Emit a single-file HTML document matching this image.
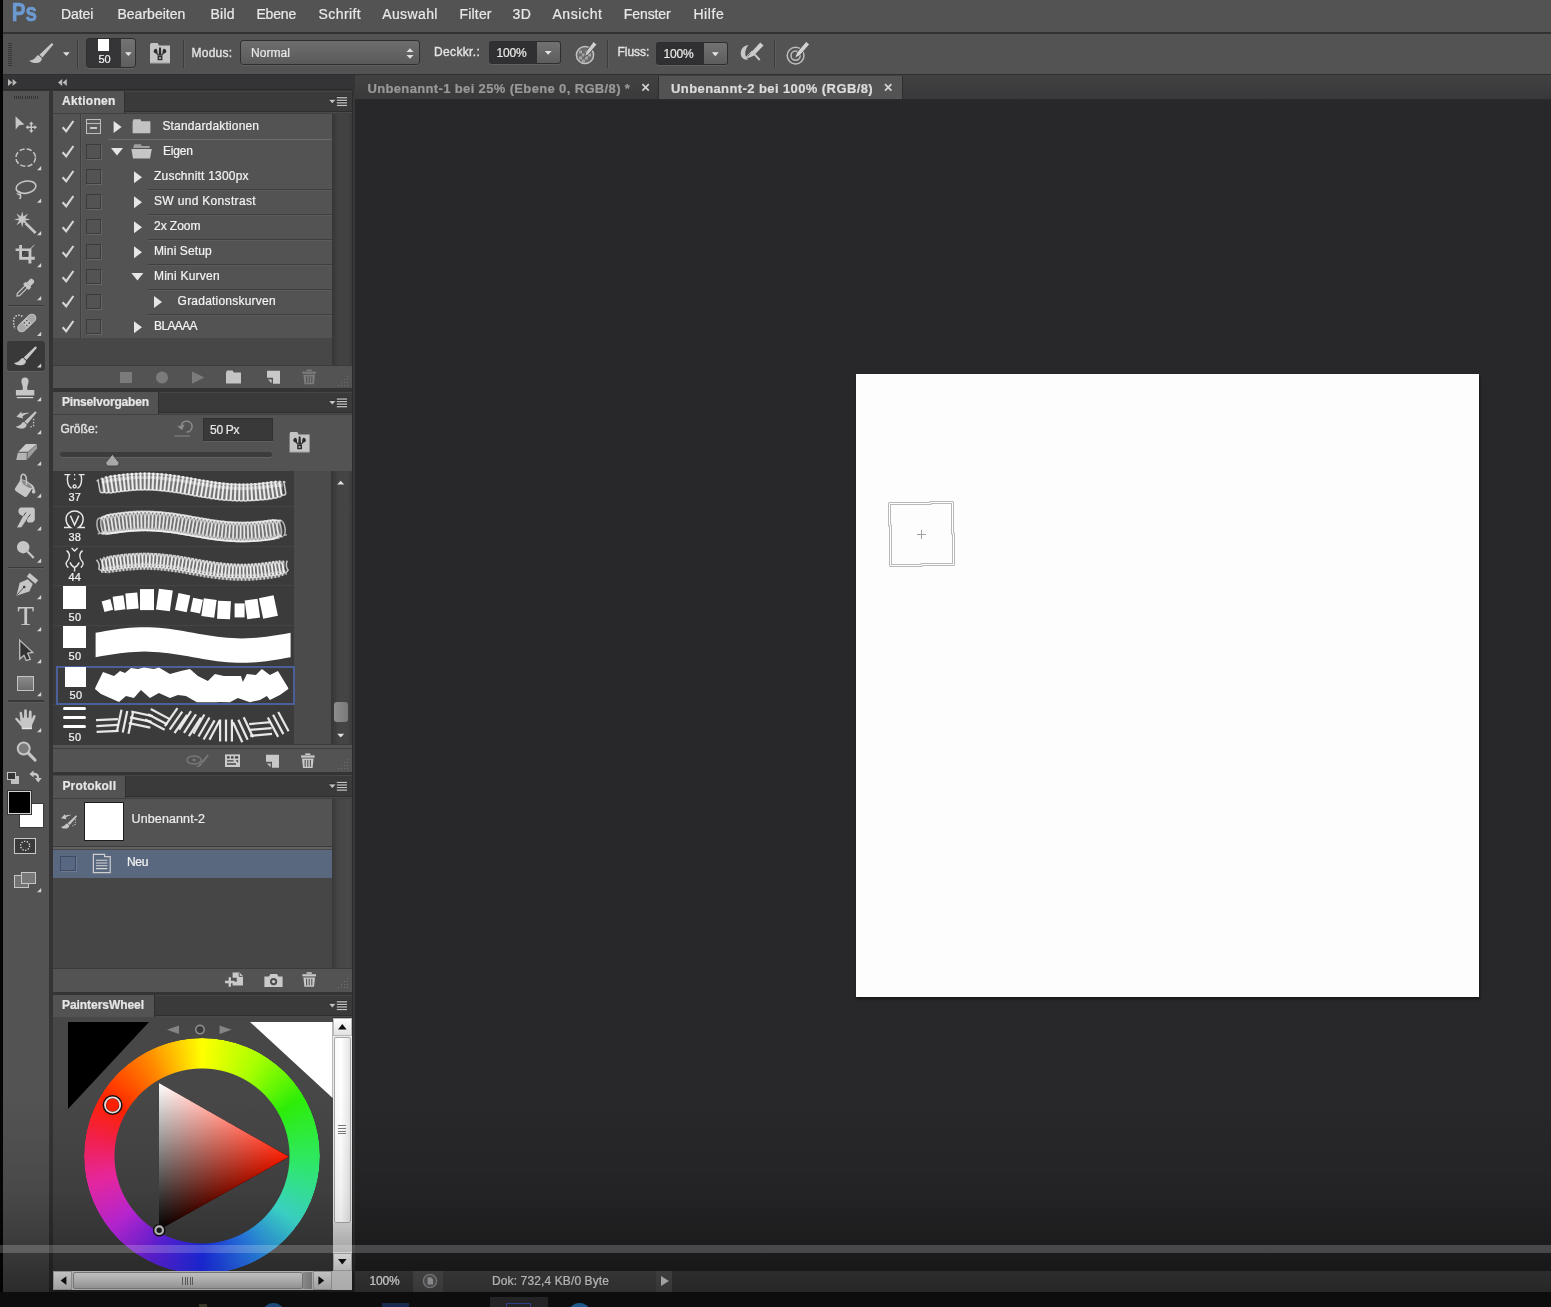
<!DOCTYPE html>
<html lang="de"><head><meta charset="utf-8"><title>Photoshop</title>
<style>
html,body{margin:0;padding:0;background:#28282a;overflow:hidden;}
#r{position:relative;width:1551px;height:1307px;overflow:hidden;font-family:"Liberation Sans", sans-serif;filter:blur(.45px);}
#r div,#r svg,#r span{position:absolute;}
.t{white-space:nowrap;-webkit-text-stroke:.22px currentColor;}
</style></head>
<body><div id="r">
<div style="left:0px;top:0px;width:1551px;height:1307px;background:#28282a;"></div>
<div style="left:0px;top:0px;width:1551px;height:32px;background:#535354;"></div>
<div style="left:0px;top:32px;width:1551px;height:1.5px;background:#323233;"></div>
<div style="left:0px;top:33.5px;width:1551px;height:40.5px;background:#535354;"></div>
<div style="left:0px;top:74px;width:1551px;height:1px;background:#2f2f30;"></div>
<div style="left:0px;top:75px;width:355px;height:16px;background:#343436;"></div>
<div style="left:354.8px;top:75px;width:1196.2px;height:24.5px;background:linear-gradient(#414142,#38383a);"></div>
<div style="left:354.8px;top:99px;width:1196.2px;height:1px;background:#2b2b2d;"></div>
<div style="left:0px;top:0px;width:2.5px;height:1292px;background:#050505;"></div>
<div style="left:2.5px;top:90.5px;width:46.5px;height:1201px;background:#535354;"></div>
<div style="left:49px;top:90.5px;width:4px;height:1201px;background:#343435;"></div>
<div style="left:53px;top:90.5px;width:299px;height:1201px;background:#343435;"></div>
<div style="left:352px;top:90.5px;width:1.4px;height:1201px;background:#2b2b2c;"></div>
<div style="left:353.4px;top:90.5px;width:1.4px;height:1201px;background:#373738;"></div>
<div style="left:2.5px;top:89.3px;width:350px;height:1.2px;background:#2b2b2c;"></div>
<div style="left:354.8px;top:75.5px;width:302.7px;height:23.5px;background:linear-gradient(#414142,#3a3a3b);"></div>
<div style="left:657.5px;top:75.5px;width:1px;height:23.5px;background:#2e2e2f;"></div>
<div style="left:658.5px;top:75.5px;width:243px;height:23.8px;background:#535354;"></div>
<div style="left:901.5px;top:75.5px;width:1px;height:23.5px;background:#2e2e2f;"></div>
<div style="left:856px;top:374px;width:622.5px;height:623px;background:#fefdfe;box-shadow:1px 2px 3px rgba(0,0,0,.45)"></div>
<div style="left:354.8px;top:1270.5px;width:1196.2px;height:21px;background:#4a4a4c;"></div>
<div style="left:354.8px;top:1270.5px;width:58.2px;height:21px;background:#505052;"></div>
<div style="left:413px;top:1270.5px;width:30px;height:21px;background:#6a6a6c;"></div>
<div style="left:443px;top:1270.5px;width:213px;height:21px;background:#58585a;"></div>
<div style="left:656px;top:1270.5px;width:16px;height:21px;background:#666668;"></div>
<div style="left:0px;top:1291.5px;width:1551px;height:15.5px;background:#0d0d0e;"></div>
<div style="left:8px;top:42.5px;width:4px;height:1px;background:#38383a;"></div>
<div style="left:8px;top:44.55px;width:4px;height:1px;background:#38383a;"></div>
<div style="left:8px;top:46.6px;width:4px;height:1px;background:#38383a;"></div>
<div style="left:8px;top:48.65px;width:4px;height:1px;background:#38383a;"></div>
<div style="left:8px;top:50.7px;width:4px;height:1px;background:#38383a;"></div>
<div style="left:8px;top:52.75px;width:4px;height:1px;background:#38383a;"></div>
<div style="left:8px;top:54.8px;width:4px;height:1px;background:#38383a;"></div>
<div style="left:8px;top:56.849999999999994px;width:4px;height:1px;background:#38383a;"></div>
<div style="left:8px;top:58.9px;width:4px;height:1px;background:#38383a;"></div>
<div style="left:8px;top:60.95px;width:4px;height:1px;background:#38383a;"></div>
<div style="left:8px;top:63.0px;width:4px;height:1px;background:#38383a;"></div>
<div style="left:8px;top:65.05px;width:4px;height:1px;background:#38383a;"></div>
<div style="left:77px;top:40px;width:1px;height:27.5px;background:#3c3c3d;"></div>
<div style="left:78px;top:40px;width:1px;height:27.5px;background:#5c5c5d;"></div>
<div style="left:183px;top:40px;width:1px;height:27.5px;background:#3c3c3d;"></div>
<div style="left:184px;top:40px;width:1px;height:27.5px;background:#5c5c5d;"></div>
<div style="left:607.3px;top:40px;width:1px;height:27.5px;background:#3c3c3d;"></div>
<div style="left:608.3px;top:40px;width:1px;height:27.5px;background:#5c5c5d;"></div>
<div style="left:773.6px;top:40px;width:1px;height:27.5px;background:#3c3c3d;"></div>
<div style="left:774.6px;top:40px;width:1px;height:27.5px;background:#5c5c5d;"></div>
<div style="left:87px;top:38.7px;width:47.6px;height:28.6px;background:#353537;border-radius:3px;box-shadow:0 0 0 1px #2e2e30, 0 1px 0 1px #626263;"></div>
<div style="left:121.3px;top:38.7px;width:13.3px;height:28.6px;background:linear-gradient(#737374,#5e5e5f);border-radius:0 3px 3px 0;"></div>
<div style="left:97.8px;top:39.4px;width:11.2px;height:11.2px;background:#ffffff;"></div>
<div style="left:241px;top:41.4px;width:177.6px;height:23px;background:linear-gradient(#6e6e6f,#5a5a5b);border-radius:3px;box-shadow:0 0 0 1px #2f2f30, 0 1px 0 1px #606061;"></div>
<div style="left:490px;top:41.5px;width:69.7px;height:21.5px;background:#303032;border-radius:2px;box-shadow:0 0 0 1px #2e2e30, 0 1px 0 1px #616162;"></div>
<div style="left:536.7px;top:41.5px;width:23px;height:21.5px;background:linear-gradient(#727273,#5d5d5e);border-radius:0 2px 2px 0;"></div>
<div style="left:657px;top:42.8px;width:69.8px;height:21.5px;background:#303032;border-radius:2px;box-shadow:0 0 0 1px #2e2e30, 0 1px 0 1px #616162;"></div>
<div style="left:703.8px;top:42.8px;width:23px;height:21.5px;background:linear-gradient(#727273,#5d5d5e);border-radius:0 2px 2px 0;"></div>
<div style="left:14.0px;top:95.6px;width:1px;height:3px;background:#343435;"></div>
<div style="left:16.1px;top:95.6px;width:1px;height:3px;background:#343435;"></div>
<div style="left:18.2px;top:95.6px;width:1px;height:3px;background:#343435;"></div>
<div style="left:20.3px;top:95.6px;width:1px;height:3px;background:#343435;"></div>
<div style="left:22.4px;top:95.6px;width:1px;height:3px;background:#343435;"></div>
<div style="left:24.5px;top:95.6px;width:1px;height:3px;background:#343435;"></div>
<div style="left:26.6px;top:95.6px;width:1px;height:3px;background:#343435;"></div>
<div style="left:28.700000000000003px;top:95.6px;width:1px;height:3px;background:#343435;"></div>
<div style="left:30.8px;top:95.6px;width:1px;height:3px;background:#343435;"></div>
<div style="left:32.900000000000006px;top:95.6px;width:1px;height:3px;background:#343435;"></div>
<div style="left:35.0px;top:95.6px;width:1px;height:3px;background:#343435;"></div>
<div style="left:37.1px;top:95.6px;width:1px;height:3px;background:#343435;"></div>
<div style="left:8px;top:304.8px;width:36px;height:1.2px;background:#39393a;"></div>
<div style="left:8px;top:306.0px;width:36px;height:1px;background:#5b5b5c;"></div>
<div style="left:8px;top:567.2px;width:36px;height:1.2px;background:#39393a;"></div>
<div style="left:8px;top:568.4000000000001px;width:36px;height:1px;background:#5b5b5c;"></div>
<div style="left:8px;top:700.4px;width:36px;height:1.2px;background:#39393a;"></div>
<div style="left:8px;top:701.6px;width:36px;height:1px;background:#5b5b5c;"></div>
<div style="left:7.3px;top:341.4px;width:38px;height:29.2px;background:#39393a;border-radius:3px;box-shadow:0 1px 0 #5f5f60;"></div>
<div style="left:16.9px;top:675.8px;width:17.4px;height:15.2px;background:linear-gradient(#8a8a8b,#6c6c6d);box-sizing:border-box;border:1.6px solid #c2c2c2;"></div>
<div style="left:11px;top:775.6px;width:8.4px;height:8.1px;background:#c0c0c0;"></div>
<div style="left:7px;top:771.8px;width:8.6px;height:8.2px;background:#343435;box-sizing:border-box;border:1.2px solid #c4c4c4;"></div>
<div style="left:20.4px;top:803.7px;width:23px;height:22.9px;background:#ffffff;box-shadow:0 0 0 1px #3a3a3b;"></div>
<div style="left:7.8px;top:791px;width:23.5px;height:23.3px;background:#000000;box-sizing:border-box;border:1.8px solid #d2d2d2;box-shadow:0 0 0 1px #343435;"></div>
<div style="left:14.4px;top:837.9px;width:21.4px;height:15.9px;background:#3a3a3b;box-sizing:border-box;border:1.6px solid #c8c8c8;"></div>
<div style="left:14.4px;top:875.2px;width:14.9px;height:12.4px;background:#727273;box-sizing:border-box;border:1.5px solid #c6c6c6;"></div>
<div style="left:20.7px;top:871.5px;width:15.1px;height:12.1px;background:#787879;box-sizing:border-box;border:1.5px solid #c6c6c6;"></div>
<div style="left:53px;top:90.5px;width:299px;height:22.5px;background:#3a3a3b;"></div>
<div style="left:53px;top:90.5px;width:299px;height:1px;background:#464647;"></div>
<div style="left:53px;top:110.9px;width:299px;height:1.2px;background:#2f2f30;"></div>
<div style="left:53px;top:112.1px;width:299px;height:1px;background:#4a4a4b;"></div>
<div style="left:53px;top:91.0px;width:71px;height:22.2px;background:#535354;box-shadow:1px 0 0 #303031;"></div>
<div style="left:53px;top:113px;width:299px;height:275px;background:#535354;"></div>
<div style="left:53px;top:113px;width:299px;height:1px;background:#404041;"></div>
<div style="left:332px;top:114px;width:20px;height:251px;background:linear-gradient(90deg,#363637,#424243 30%,#424243 80%,#3a3a3b);"></div>
<div style="left:53px;top:338px;width:279px;height:27px;background:#474748;"></div>
<div style="left:53px;top:365px;width:299px;height:1px;background:#3b3b3c;"></div>
<div style="left:53px;top:366px;width:299px;height:22px;background:#535354;"></div>
<div style="left:80px;top:114px;width:1px;height:224px;background:#404041;"></div>
<div style="left:81px;top:114px;width:1px;height:224px;background:#5a5a5b;"></div>
<div style="left:108px;top:139px;width:224px;height:1px;background:#6c6c6d;"></div>
<div style="left:148px;top:189px;width:184px;height:1.2px;background:#3e3e3f;"></div>
<div style="left:148px;top:190.2px;width:184px;height:1px;background:#5b5b5c;"></div>
<div style="left:148px;top:214px;width:184px;height:1.2px;background:#3e3e3f;"></div>
<div style="left:148px;top:215.2px;width:184px;height:1px;background:#5b5b5c;"></div>
<div style="left:148px;top:239px;width:184px;height:1.2px;background:#3e3e3f;"></div>
<div style="left:148px;top:240.2px;width:184px;height:1px;background:#5b5b5c;"></div>
<div style="left:148px;top:264px;width:184px;height:1.2px;background:#3e3e3f;"></div>
<div style="left:148px;top:265.2px;width:184px;height:1px;background:#5b5b5c;"></div>
<div style="left:148px;top:289px;width:184px;height:1.2px;background:#3e3e3f;"></div>
<div style="left:148px;top:290.2px;width:184px;height:1px;background:#5b5b5c;"></div>
<div style="left:148px;top:314px;width:184px;height:1.2px;background:#3e3e3f;"></div>
<div style="left:148px;top:315.2px;width:184px;height:1px;background:#5b5b5c;"></div>
<div style="left:85.6px;top:144.2px;width:15.4px;height:14.4px;background:#535354;box-sizing:border-box;border:1px solid #3c3c3d;box-shadow:1px 1px 0 #666667;"></div>
<div style="left:85.6px;top:169.2px;width:15.4px;height:14.4px;background:#535354;box-sizing:border-box;border:1px solid #3c3c3d;box-shadow:1px 1px 0 #666667;"></div>
<div style="left:85.6px;top:194.2px;width:15.4px;height:14.4px;background:#535354;box-sizing:border-box;border:1px solid #3c3c3d;box-shadow:1px 1px 0 #666667;"></div>
<div style="left:85.6px;top:219.2px;width:15.4px;height:14.4px;background:#535354;box-sizing:border-box;border:1px solid #3c3c3d;box-shadow:1px 1px 0 #666667;"></div>
<div style="left:85.6px;top:244.2px;width:15.4px;height:14.4px;background:#535354;box-sizing:border-box;border:1px solid #3c3c3d;box-shadow:1px 1px 0 #666667;"></div>
<div style="left:85.6px;top:269.20000000000005px;width:15.4px;height:14.4px;background:#535354;box-sizing:border-box;border:1px solid #3c3c3d;box-shadow:1px 1px 0 #666667;"></div>
<div style="left:85.6px;top:294.20000000000005px;width:15.4px;height:14.4px;background:#535354;box-sizing:border-box;border:1px solid #3c3c3d;box-shadow:1px 1px 0 #666667;"></div>
<div style="left:85.6px;top:319.20000000000005px;width:15.4px;height:14.4px;background:#535354;box-sizing:border-box;border:1px solid #3c3c3d;box-shadow:1px 1px 0 #666667;"></div>
<div style="left:85.6px;top:119.4px;width:15px;height:14.2px;background:#5a5a5b;box-sizing:border-box;border:1.3px solid #bdbdbd;"></div>
<div style="left:86.5px;top:122.6px;width:13.4px;height:1.2px;background:#bdbdbd;"></div>
<div style="left:89.8px;top:127.4px;width:6.8px;height:1.6px;background:#c8c8c8;"></div>
<div style="left:120px;top:372px;width:12px;height:11.4px;background:#7b7b7c;"></div>
<div style="left:337.5px;top:385px;width:1.4px;height:1.4px;background:#6e6e6f;"></div>
<div style="left:340.5px;top:382px;width:1.4px;height:1.4px;background:#6e6e6f;"></div>
<div style="left:340.5px;top:385px;width:1.4px;height:1.4px;background:#6e6e6f;"></div>
<div style="left:343.5px;top:379px;width:1.4px;height:1.4px;background:#6e6e6f;"></div>
<div style="left:343.5px;top:382px;width:1.4px;height:1.4px;background:#6e6e6f;"></div>
<div style="left:343.5px;top:385px;width:1.4px;height:1.4px;background:#6e6e6f;"></div>
<div style="left:346.5px;top:376px;width:1.4px;height:1.4px;background:#6e6e6f;"></div>
<div style="left:346.5px;top:379px;width:1.4px;height:1.4px;background:#6e6e6f;"></div>
<div style="left:346.5px;top:382px;width:1.4px;height:1.4px;background:#6e6e6f;"></div>
<div style="left:346.5px;top:385px;width:1.4px;height:1.4px;background:#6e6e6f;"></div>
<div style="left:53px;top:391.8px;width:299px;height:22.5px;background:#3a3a3b;"></div>
<div style="left:53px;top:391.8px;width:299px;height:1px;background:#464647;"></div>
<div style="left:53px;top:412.2px;width:299px;height:1.2px;background:#2f2f30;"></div>
<div style="left:53px;top:413.40000000000003px;width:299px;height:1px;background:#4a4a4b;"></div>
<div style="left:53px;top:392.3px;width:105px;height:22.2px;background:#535354;box-shadow:1px 0 0 #303031;"></div>
<div style="left:53px;top:414.3px;width:299px;height:358px;background:#535354;"></div>
<div style="left:53px;top:414.3px;width:299px;height:1px;background:#404041;"></div>
<div style="left:203.6px;top:418.6px;width:68.4px;height:21.4px;background:#39393a;box-shadow:0 0 0 1px #303031, 0 1px 0 1px #616162;"></div>
<div style="left:60.4px;top:452.4px;width:211.6px;height:5px;background:#3c3c3d;border-radius:2.5px;box-shadow:0 1px 0 #626263;"></div>
<div style="left:53px;top:470.8px;width:241px;height:273.4px;background:#3b3b3c;"></div>
<div style="left:294px;top:470.8px;width:37px;height:273.4px;background:#4b4b4c;"></div>
<div style="left:331px;top:470.8px;width:21px;height:273.4px;background:linear-gradient(90deg,#353536,#444445 35%,#444445 80%,#3b3b3c);"></div>
<div style="left:53px;top:506px;width:241px;height:1px;background:#444445;"></div>
<div style="left:53px;top:545.5px;width:241px;height:1px;background:#444445;"></div>
<div style="left:53px;top:585px;width:241px;height:1px;background:#444445;"></div>
<div style="left:53px;top:624.5px;width:241px;height:1px;background:#444445;"></div>
<div style="left:53px;top:704px;width:241px;height:1px;background:#444445;"></div>
<div style="left:53px;top:744.2px;width:299px;height:1.2px;background:#3a3a3b;"></div>
<div style="left:53px;top:745.4px;width:299px;height:3px;background:#555556;"></div>
<div style="left:53px;top:748.4px;width:299px;height:1px;background:#3e3e3f;"></div>
<div style="left:53px;top:749.4px;width:299px;height:22.2px;background:#535354;"></div>
<div style="left:333.6px;top:702.4px;width:14.6px;height:19.6px;background:linear-gradient(90deg,#8e8e8f,#7a7a7b);border-radius:3px;"></div>
<div style="left:337.5px;top:767.6px;width:1.4px;height:1.4px;background:#6e6e6f;"></div>
<div style="left:340.5px;top:764.6px;width:1.4px;height:1.4px;background:#6e6e6f;"></div>
<div style="left:340.5px;top:767.6px;width:1.4px;height:1.4px;background:#6e6e6f;"></div>
<div style="left:343.5px;top:761.6px;width:1.4px;height:1.4px;background:#6e6e6f;"></div>
<div style="left:343.5px;top:764.6px;width:1.4px;height:1.4px;background:#6e6e6f;"></div>
<div style="left:343.5px;top:767.6px;width:1.4px;height:1.4px;background:#6e6e6f;"></div>
<div style="left:346.5px;top:758.6px;width:1.4px;height:1.4px;background:#6e6e6f;"></div>
<div style="left:346.5px;top:761.6px;width:1.4px;height:1.4px;background:#6e6e6f;"></div>
<div style="left:346.5px;top:764.6px;width:1.4px;height:1.4px;background:#6e6e6f;"></div>
<div style="left:346.5px;top:767.6px;width:1.4px;height:1.4px;background:#6e6e6f;"></div>
<div style="left:53px;top:775.2px;width:299px;height:22.5px;background:#3a3a3b;"></div>
<div style="left:53px;top:775.2px;width:299px;height:1px;background:#464647;"></div>
<div style="left:53px;top:795.6px;width:299px;height:1.2px;background:#2f2f30;"></div>
<div style="left:53px;top:796.8000000000001px;width:299px;height:1px;background:#4a4a4b;"></div>
<div style="left:53px;top:775.7px;width:72px;height:22.2px;background:#535354;box-shadow:1px 0 0 #303031;"></div>
<div style="left:53px;top:797.7px;width:299px;height:194px;background:#535354;"></div>
<div style="left:53px;top:797.7px;width:299px;height:1px;background:#404041;"></div>
<div style="left:332px;top:798.7px;width:20px;height:169.3px;background:linear-gradient(90deg,#39393a,#454546 30%,#4a4a4b 80%,#454546);"></div>
<div style="left:53px;top:846px;width:279px;height:1.4px;background:#3c3c3d;"></div>
<div style="left:53px;top:847.4px;width:279px;height:1.2px;background:#616162;"></div>
<div style="left:53px;top:848.6px;width:279px;height:1.4px;background:#48484a;"></div>
<div style="left:53px;top:850px;width:279px;height:28px;background:#5a687f;"></div>
<div style="left:53px;top:878px;width:279px;height:90px;background:#464647;"></div>
<div style="left:53px;top:968px;width:299px;height:1px;background:#3b3b3c;"></div>
<div style="left:53px;top:969px;width:299px;height:22.4px;background:#535354;"></div>
<div style="left:84.4px;top:802px;width:39.6px;height:39px;background:#ffffff;box-sizing:border-box;border:1px solid #1c1c1c;"></div>
<div style="left:60.4px;top:856px;width:15.2px;height:15px;background:#586883;box-sizing:border-box;border:1px solid #404b60;box-shadow:1px 1px 0 #6d7a90;"></div>
<div style="left:337.5px;top:987px;width:1.4px;height:1.4px;background:#6e6e6f;"></div>
<div style="left:340.5px;top:984px;width:1.4px;height:1.4px;background:#6e6e6f;"></div>
<div style="left:340.5px;top:987px;width:1.4px;height:1.4px;background:#6e6e6f;"></div>
<div style="left:343.5px;top:981px;width:1.4px;height:1.4px;background:#6e6e6f;"></div>
<div style="left:343.5px;top:984px;width:1.4px;height:1.4px;background:#6e6e6f;"></div>
<div style="left:343.5px;top:987px;width:1.4px;height:1.4px;background:#6e6e6f;"></div>
<div style="left:346.5px;top:978px;width:1.4px;height:1.4px;background:#6e6e6f;"></div>
<div style="left:346.5px;top:981px;width:1.4px;height:1.4px;background:#6e6e6f;"></div>
<div style="left:346.5px;top:984px;width:1.4px;height:1.4px;background:#6e6e6f;"></div>
<div style="left:346.5px;top:987px;width:1.4px;height:1.4px;background:#6e6e6f;"></div>
<div style="left:53px;top:994.6px;width:299px;height:22.5px;background:#3a3a3b;"></div>
<div style="left:53px;top:994.6px;width:299px;height:1px;background:#464647;"></div>
<div style="left:53px;top:1015.0px;width:299px;height:1.2px;background:#2f2f30;"></div>
<div style="left:53px;top:1016.2px;width:299px;height:1px;background:#4a4a4b;"></div>
<div style="left:53px;top:995.1px;width:100.6px;height:22.2px;background:#535354;box-shadow:1px 0 0 #303031;"></div>
<div style="left:53px;top:1017.1px;width:280px;height:254.4px;background:#474748;"></div>
<div style="left:0;top:1090px;width:1551px;height:201.5px;background:linear-gradient(rgba(0,0,0,0) 0%,rgba(0,0,0,.03) 25%,rgba(0,0,0,.08) 50%,rgba(0,0,0,.2) 77%,rgba(0,0,0,.35) 100%);"></div>
<div style="left:84px;top:1038px;width:236px;height:236px;border-radius:50%;background:conic-gradient(from 0deg,#ffff00 0deg,#a8ff00 30deg,#2dee08 60deg,#30ef6e 95deg,#3ee0d2 125deg,#2a84f0 152deg,#1c2cf0 180deg,#6422e6 206deg,#c428e0 232deg,#f028a0 258deg,#f6204a 280deg,#ff2200 300deg,#ff8400 330deg,#ffff00 360deg);-webkit-mask:radial-gradient(circle closest-side,transparent 87px,#000 88px,#000 117.4px,transparent 118.4px);mask:radial-gradient(circle closest-side,transparent 87px,#000 88px,#000 117.4px,transparent 118.4px);"></div>
<div style="left:333px;top:1017.6px;width:18.6px;height:254px;background:#e9e9e9;"></div>
<div style="left:333px;top:1017.6px;width:18.6px;height:18px;background:linear-gradient(#fdfdfd,#e2e2e2);box-sizing:border-box;border:1px solid #b8b8b8;"></div>
<div style="left:333.6px;top:1037px;width:17.4px;height:186px;background:linear-gradient(90deg,#fafafa,#ffffff 40%,#e4e4e4);box-sizing:border-box;border:1px solid #a8a8a8;border-radius:2px;"></div>
<div style="left:338px;top:1125.4px;width:8px;height:1.1px;background:#7a7a7a;"></div>
<div style="left:338px;top:1128.0px;width:8px;height:1.1px;background:#7a7a7a;"></div>
<div style="left:338px;top:1130.6000000000001px;width:8px;height:1.1px;background:#7a7a7a;"></div>
<div style="left:338px;top:1133.2px;width:8px;height:1.1px;background:#7a7a7a;"></div>
<div style="left:333px;top:1223px;width:18.6px;height:29px;background:linear-gradient(#d8d8d8,#bcbcbc);"></div>
<div style="left:333px;top:1252.6px;width:18.6px;height:18px;background:linear-gradient(#f4f4f4,#d8d8d8);box-sizing:border-box;border:1px solid #b0b0b0;"></div>
<div style="left:53px;top:1271.4px;width:299px;height:18.4px;background:#cfcfcf;"></div>
<div style="left:53px;top:1271.4px;width:19px;height:18.4px;background:linear-gradient(#e8e8e8,#c8c8c8);box-sizing:border-box;border:1px solid #a8a8a8;"></div>
<div style="left:72.6px;top:1272px;width:230px;height:17.2px;background:linear-gradient(#e4e4e4,#cfcfcf 50%,#b4b4b4);box-sizing:border-box;border:1px solid #8e8e8e;border-radius:2px;"></div>
<div style="left:182.0px;top:1276.6px;width:1.1px;height:8px;background:#6e6e6e;"></div>
<div style="left:184.5px;top:1276.6px;width:1.1px;height:8px;background:#6e6e6e;"></div>
<div style="left:187.0px;top:1276.6px;width:1.1px;height:8px;background:#6e6e6e;"></div>
<div style="left:189.5px;top:1276.6px;width:1.1px;height:8px;background:#6e6e6e;"></div>
<div style="left:192.0px;top:1276.6px;width:1.1px;height:8px;background:#6e6e6e;"></div>
<div style="left:302.8px;top:1272px;width:9.4px;height:17.4px;background:linear-gradient(90deg,#a8a8a8,#8e8e8e);"></div>
<div style="left:312.6px;top:1271.4px;width:19px;height:18.4px;background:linear-gradient(#e8e8e8,#c8c8c8);box-sizing:border-box;border:1px solid #a8a8a8;"></div>
<div style="left:331.6px;top:1271.4px;width:20.4px;height:18.4px;background:#d4d4d4;"></div>
<div style="left:63px;top:586px;width:22.6px;height:22.6px;background:#ffffff;"></div>
<div style="left:63px;top:626px;width:22.6px;height:22.4px;background:#ffffff;"></div>
<div style="left:56px;top:665.6px;width:239px;height:39.4px;background:transparent;box-sizing:border-box;border:2px solid #4b5f9a;"></div>
<div style="left:65px;top:667px;width:21px;height:20.4px;background:#ffffff;"></div>
<div style="left:63px;top:706.8px;width:22.6px;height:3px;background:#ffffff;border-radius:1.5px;"></div>
<div style="left:63px;top:716.2px;width:22.6px;height:3px;background:#ffffff;border-radius:1.5px;"></div>
<div style="left:63px;top:724.8px;width:22.6px;height:3px;background:#ffffff;border-radius:1.5px;"></div>
<svg width="1551" height="1307" viewBox="0 0 1551 1307" style="left:0;top:0;">
<defs><filter id="bl" x="-5%" y="-30%" width="110%" height="160%"><feGaussianBlur stdDeviation="0.45"/></filter><filter id="bl2" x="-5%" y="-30%" width="110%" height="160%"><feGaussianBlur stdDeviation="0.7"/></filter><clipPath id="c7"><rect x="94" y="705.5" width="198" height="38.5"/></clipPath></defs>
<path d="M8.0,79 L12.2,82.5 L8.0,86 Z M12.6,79 L16.8,82.5 L12.6,86 Z" fill="#b8b8b8"/>
<path d="M62.2,79 L58.0,82.5 L62.2,86 Z M66.8,79 L62.6,82.5 L66.8,86 Z" fill="#b8b8b8"/>
<g transform="translate(29.2,60) scale(1.0)"><path d="M22.6,-17.1 L24.2,-15.4 L13.2,-2.4 L10.2,-5.2 Z" fill="#c6c6c6"/><path d="M9.6,-4.6 L12.6,-1.8 C12.8,1.6 9.2,3.4 5.6,3 C3.2,2.8 1.4,2.2 0,0.6 C3,0.4 5.6,-1.2 6.8,-3 C7.6,-4.2 8.6,-4.8 9.6,-4.6 Z" fill="#c6c6c6"/></g>
<path d="M63,52.2 L69.8,52.2 L66.4,56 Z" fill="#e0e0e0"/>
<path d="M125,52.2 L131.8,52.2 L128.4,56 Z" fill="#e6e6e6"/>
<g transform="translate(150,42.6)"><path d="M0,2.5 L0.8,0.3 L7.6,0.3 L9,2.8 L20,2.8 L20,20.6 L0,20.6 Z" fill="#c4c4c4"/><path d="M0,20 L20,20 L20,20.8 L0,20.8Z" fill="#9a9a9a"/><path d="M9.1,5 L10.9,5 L11.4,12.8 L8.6,12.8 Z" fill="#2c2c2c"/><path d="M3.6,8.8 C3.8,6.8 5.2,6 6.2,6.2 C7.4,7 7.6,9 7.4,10.4 L8.8,12.4 L7.8,13 L6,10.8 C5,10.8 4,10 3.6,8.8 Z" fill="#2c2c2c"/><path d="M16.4,8.8 C16.2,6.8 14.8,6 13.8,6.2 C12.6,7 12.4,9 12.6,10.4 L11.2,12.4 L12.2,13 L14,10.8 C15,10.8 16,10 16.4,8.8 Z" fill="#2c2c2c"/><path d="M7.6,13 L12.4,13 L12.4,17.6 L7.6,17.6 Z M9,14.6 L9,16.2 L11,16.2 L11,14.6 Z" fill="#2c2c2c" fill-rule="evenodd"/></g>
<path d="M406.5,52 L413.5,52 L410,48.2 Z M406.5,55 L413.5,55 L410,58.8 Z" fill="#e0e0e0"/>
<path d="M544.8000000000001,51.05 L551.6,51.05 L548.2,54.85 Z" fill="#e6e6e6"/>
<path d="M711.9,52.349999999999994 L718.6999999999999,52.349999999999994 L715.3,56.15 Z" fill="#e6e6e6"/>
<g transform="translate(585,53.4)"><circle cx="0" cy="1.6" r="8.6" fill="#6a6a6b" stroke="#c2c2c2" stroke-width="1.5"/><path d="M-6,-3 h3 v3 h-3z M0,-3 h3 v3 h-3z M-3,0 h3 v3 h-3z M3,0 h3 v3 h-3z M-6,3 h3 v3 h-3z M0,3 h3 v3 h-3z M-3,6 h3 v3 h-3z" fill="#b0b0b0" opacity=".8"/><path d="M8.6,-12 L11.8,-8.8 L3.6,0.8 L-0.6,3.4 L1.2,-2 Z" fill="#d0d0d0" stroke="#535354" stroke-width=".9"/></g>
<g transform="translate(751.5,52.6)"><path d="M-3,-7.6 C-9,-7 -11.4,-2 -10.6,2.4 C-10,5.6 -7,7.6 -3.6,7.2 C-6.4,4.6 -7,0.6 -5.6,-3 C-5,-4.8 -4,-6.4 -3,-7.6 Z" fill="#c8c8c8"/><path d="M8.8,-10.2 L12,-7 L2,3.2 L-3,5.4 L-1,0.4 Z" fill="#d0d0d0"/><path d="M-4.6,5.8 L4.4,-3.2" stroke="#c8c8c8" stroke-width="1.2" fill="none"/><path d="M2.2,0.8 L8.2,7.4" stroke="#c8c8c8" stroke-width="2" fill="none"/><path d="M-6,5.2 L0.6,-1.6 L3,0.8 Z" fill="none" stroke="#c8c8c8" stroke-width="1"/></g>
<g transform="translate(797.6,53.4)"><circle cx="-2" cy="2.2" r="8.4" fill="none" stroke="#bdbdbd" stroke-width="1.5"/><circle cx="-2" cy="2.2" r="4.6" fill="none" stroke="#bdbdbd" stroke-width="1.5"/><path d="M8.6,-12 L11.8,-8.8 L2,2.4 L-3,4.8 L-1,-0.6 Z" fill="#d2d2d2" stroke="#535354" stroke-width=".9"/></g>
<path d="M642.4,84.2 L648.8000000000001,90.60000000000001 M648.8000000000001,84.2 L642.4,90.60000000000001" stroke="#d0d0d0" stroke-width="1.7" fill="none"/>
<path d="M885.0,84.2 L891.4000000000001,90.60000000000001 M891.4000000000001,84.2 L885.0,90.60000000000001" stroke="#d4d4d4" stroke-width="1.7" fill="none"/>
<path d="M15.5,116.2 L24.4,124.4 L19.2,125.2 L15.7,129.4 Z" fill="#c6c6c6"/>
<path d="M31.3,121.4 L33.6,124.2 L32,124.2 L32,126.5 L34.3,126.5 L34.3,124.9 L37,127.2 L34.3,129.5 L34.3,127.9 L32,127.9 L32,130.2 L33.6,130.2 L31.3,133 L29,130.2 L30.6,130.2 L30.6,127.9 L28.3,127.9 L28.3,129.5 L25.6,127.2 L28.3,124.9 L28.3,126.5 L30.6,126.5 L30.6,124.2 L29,124.2 Z" fill="#c6c6c6"/>
<ellipse cx="25.7" cy="157.6" rx="9.8" ry="8.7" fill="none" stroke="#c6c6c6" stroke-width="1.5" stroke-dasharray="5.2,2.2"/>
<path d="M41.2,166 L41.2,170.2 L37,170.2 Z" fill="#d4d4d4"/>
<g fill="none" stroke="#c6c6c6" stroke-width="1.6"><ellipse cx="26" cy="187.2" rx="10" ry="6" transform="rotate(-10 26 187.2)"/><path d="M17,191.6 C18.6,191.2 20.4,192 20.6,193.4 C20.8,194.8 19,195 18.2,194.2 C20.6,194.4 21.8,196.6 19.6,199"/></g>
<path d="M41.2,198.6 L41.2,202.79999999999998 L37,202.79999999999998 Z" fill="#d4d4d4"/>
<polygon points="22.20,211.20 23.42,216.44 28.00,213.60 25.16,218.18 30.40,219.40 25.16,220.62 28.00,225.20 23.42,222.36 22.20,227.60 20.98,222.36 16.40,225.20 19.24,220.62 14.00,219.40 19.24,218.18 16.40,213.60 20.98,216.44" fill="#c6c6c6"/>
<path d="M25.6,223.2 L35.6,233" stroke="#c6c6c6" stroke-width="2.6"/>
<path d="M41.2,231 L41.2,235.2 L37,235.2 Z" fill="#d4d4d4"/>
<path d="M19.2,245 h2.8 v3.6 h9.4 v15 h-3 v-3.8 h-9.2 Z M22,251 v5.8 h6.4 v-5.8 Z" fill="#c6c6c6" fill-rule="evenodd"/>
<path d="M15.6,248.6 h4 v2.4 h-4 Z M31,256.8 h3.8 v3 h-3.8 Z" fill="#c6c6c6"/>
<path d="M22.6,256.4 L34.4,245" stroke="#c6c6c6" stroke-width="1"/>
<path d="M22,251 h6.4 v5.8 h-6.4Z" fill="#3c3c3d" opacity=".75"/>
<path d="M41.2,263 L41.2,267.2 L37,267.2 Z" fill="#d4d4d4"/>
<g transform="translate(17,296) rotate(-45)"><path d="M0,0 L2,-1.6 L13.5,-1.6 L13.5,1.6 L2,1.6 Z" fill="none" stroke="#c6c6c6" stroke-width="1.2"/><rect x="12.6" y="-4" width="3.6" height="8" fill="#c6c6c6"/><path d="M16.2,-2.6 L21,-2.6 C23.6,-2.6 23.6,2.6 21,2.6 L16.2,2.6 Z" fill="#c6c6c6"/></g>
<path d="M41.2,296 L41.2,300.2 L37,300.2 Z" fill="#d4d4d4"/>
<g transform="translate(26.8,323) rotate(-44)"><rect x="-11" y="-4" width="22" height="8" rx="4" fill="#a8a8a8" stroke="#c6c6c6" stroke-width="1"/><rect x="-3.4" y="-4" width="6.8" height="8" fill="#c2c2c2"/><g fill="#4a4a4b"><circle cx="-1.7" cy="-1.8" r=".8"/><circle cx="1.7" cy="-1.8" r=".8"/><circle cx="-1.7" cy="1.8" r=".8"/><circle cx="1.7" cy="1.8" r=".8"/></g></g>
<path d="M22.4,316.4 C18,313.6 13.4,316.4 13.6,321 C13.6,324 14,326.4 15,329" fill="none" stroke="#d8d8d8" stroke-width="1.5" stroke-dasharray="1.4,1.5"/>
<path d="M41.2,331.8 L41.2,336.0 L37,336.0 Z" fill="#d4d4d4"/>
<g transform="translate(14,362.4) scale(0.95)"><path d="M22.6,-17.1 L24.2,-15.4 L13.2,-2.4 L10.2,-5.2 Z" fill="#c8c8c8"/><path d="M9.6,-4.6 L12.6,-1.8 C12.8,1.6 9.2,3.4 5.6,3 C3.2,2.8 1.4,2.2 0,0.6 C3,0.4 5.6,-1.2 6.8,-3 C7.6,-4.2 8.6,-4.8 9.6,-4.6 Z" fill="#c8c8c8"/></g>
<path d="M41.2,363.4 L41.2,367.59999999999997 L37,367.59999999999997 Z" fill="#d4d4d4"/>
<path d="M25,377.6 C27.6,377.6 28.8,379.6 28.6,381.6 C28.4,384 27.2,385.8 27.2,388 L27.4,390 L34.3,390 L34.3,395.4 L15.9,395.4 L15.9,390 L22.6,390 L22.8,388 C22.8,385.8 21.6,384 21.4,381.6 C21.2,379.6 22.4,377.6 25,377.6 Z" fill="#c6c6c6"/>
<rect x="16.8" y="397" width="16.4" height="1.2" fill="#d6d6d6"/>
<path d="M41.2,397 L41.2,401.2 L37,401.2 Z" fill="#d4d4d4"/>
<g transform="translate(15.8,426) scale(.86)"><path d="M22.6,-17.1 L24.2,-15.4 L13.2,-2.4 L10.2,-5.2 Z" fill="#c6c6c6"/><path d="M9.6,-4.6 L12.6,-1.8 C12.8,1.6 9.2,3.4 5.6,3 C3.2,2.8 1.4,2.2 0,0.6 C3,0.4 5.6,-1.2 6.8,-3 C7.6,-4.2 8.6,-4.8 9.6,-4.6 Z" fill="#c6c6c6"/></g>
<path d="M16.4,416.8 L21.4,411.6 L21.6,413.8 C24,413 27.4,412.6 29.8,413 C26.8,413.6 24.2,414.8 22.4,416.4 L23.2,418.4 Z" fill="#c6c6c6"/>
<path d="M33.6,419 L33.6,425.6 L30,427.4" fill="none" stroke="#d0d0d0" stroke-width="1.3" stroke-dasharray="1.3,1.6"/>
<path d="M41.2,430 L41.2,434.2 L37,434.2 Z" fill="#d4d4d4"/>
<path d="M25.8,444 L37,444 L27.8,451.8 L18.4,451.8 Z" fill="#cacaca"/>
<path d="M17.8,452.8 L26.8,452.8 L26.6,460 L16.2,460 Z" fill="#b4b4b4"/>
<path d="M37,444.6 L37,448.6 L27.4,459.6 L27.6,452.6 Z" fill="#9c9c9c"/>
<path d="M41.2,461.2 L41.2,465.4 L37,465.4 Z" fill="#d4d4d4"/>
<g transform="translate(23.6,488.4) rotate(33)"><rect x="-7.2" y="-5" width="14.4" height="11.6" rx="2.4" fill="#c6c6c6"/><ellipse cx="0" cy="-5" rx="7.2" ry="2.3" fill="#8a8a8a" stroke="#c6c6c6" stroke-width="1"/></g>
<path d="M22.2,484.6 C19.8,478.6 21,474 23.4,474.2 C26,474.4 26.8,479.4 26.4,485" fill="none" stroke="#c6c6c6" stroke-width="1.5"/>
<path d="M29.6,483.6 C32.6,484.4 34.4,486.6 34.6,489.4 C36,491.2 35.4,493.6 33.6,493.6 C31.8,493.6 31.4,491.6 32.6,490 C32.4,487.6 31.4,485.4 29.6,483.6 Z" fill="#c6c6c6"/>
<path d="M41.2,493.6 L41.2,497.8 L37,497.8 Z" fill="#d4d4d4"/>
<path d="M21.4,507.6 L32.6,507.6 C34,507.6 34.8,508.6 34.8,509.8 L34.8,519 C34.8,521 33.2,522.4 31.4,522.4 L28.6,522.4 C27.4,522.4 26.8,521.6 27,520.6 L28,517.4 L21.4,527.2 L17,527.4 L23.2,516 C20.6,515.6 18.6,514 18.4,511.6 C18.4,509.2 19.6,507.6 21.4,507.6 Z" fill="#c6c6c6"/>
<path d="M23.6,515.8 L26,512.4 M27.8,517.6 L30.4,514.4" stroke="#4a4a4b" stroke-width="1" fill="none"/>
<path d="M41.2,526.2 L41.2,530.4000000000001 L37,530.4000000000001 Z" fill="#d4d4d4"/>
<circle cx="23.2" cy="547.2" r="6.2" fill="#c6c6c6"/><path d="M27.4,551.4 L33.8,558" stroke="#c6c6c6" stroke-width="2.2"/>
<path d="M41.2,558.6 L41.2,562.8000000000001 L37,562.8000000000001 Z" fill="#d4d4d4"/>
<path d="M16.4,595.8 L19.7,582.7 L27.7,579.2 L32.8,584 L29.3,591.5 Z" fill="#c6c6c6"/>
<g transform="translate(32.5,578.4) rotate(40)"><rect x="-5.6" y="-2.2" width="11.2" height="4.4" fill="#c6c6c6"/></g>
<circle cx="24.2" cy="587" r="1.3" fill="#3a3a3b"/><path d="M17,595 L23.6,587.6" stroke="#4a4a4b" stroke-width=".9"/>
<path d="M41.2,595 L41.2,599.2 L37,599.2 Z" fill="#d4d4d4"/>
<path d="M41.2,627 L41.2,631.2 L37,631.2 Z" fill="#d4d4d4"/>
<path d="M19.7,640.1 L32.8,652.5 L27.7,653.2 L30.3,659.3 L26.2,660.4 L24,655.3 L19.7,659 Z" fill="#323233" stroke="#bebebe" stroke-width="1.3" stroke-linejoin="miter"/>
<path d="M41.2,659 L41.2,663.2 L37,663.2 Z" fill="#d4d4d4"/>
<path d="M41.2,692 L41.2,696.2 L37,696.2 Z" fill="#d4d4d4"/>
<path d="M21.9,729 L31.8,729 L32.2,724.4 C33.8,721.6 35.2,718.6 35.6,716 C35.6,714.6 33.8,714.6 33.2,715.8 L31.8,719 L31.6,711.6 C31.4,710 29.2,710 29,711.6 L28.6,717.8 L27,717.8 L26.8,710.4 C26.6,708.8 24.4,708.8 24.2,710.4 L24,717.8 L22.8,717.8 L22,712.8 C21.6,711.4 19.6,711.6 19.6,713.2 L20.4,721.4 L17.4,718.2 C16.2,717.2 14.6,718 15.4,719.6 L21.4,726.4 Z" fill="#c6c6c6"/>
<rect x="21.9" y="727.8" width="9.9" height="1.4" fill="#e8e8e8"/>
<path d="M41.2,728 L41.2,732.2 L37,732.2 Z" fill="#d4d4d4"/>
<circle cx="23.7" cy="748.5" r="6" fill="#7c7c7d" stroke="#c6c6c6" stroke-width="1.9"/><path d="M28.4,753.2 L35,760" stroke="#c6c6c6" stroke-width="3.2" stroke-linecap="round"/>
<path d="M29.4,774 L33.6,770.4 L33.6,772.8 C37.6,772.6 39.2,774.8 39,778 L41.8,778 L38.2,782.6 L34.8,778 L37,778 C37.2,776 36.2,775 33.6,775.2 L33.6,777.6 Z" fill="#c6c6c6"/>
<circle cx="25.1" cy="845.8" r="4.5" fill="none" stroke="#e0e0e0" stroke-width="1.3" stroke-dasharray="1.3,1.5"/>
<path d="M41.2,888 L41.2,892.2 L37,892.2 Z" fill="#d4d4d4"/>
<path d="M329,99.5 L335.6,99.5 L332.3,103.3 Z" fill="#c4c4c4"/>
<rect x="336.8" y="96.50" width="10.2" height="9.6" fill="#262627"/>
<rect x="336.8" y="97.10" width="10.2" height="1.3" fill="#c4c4c4"/>
<rect x="336.8" y="99.65" width="10.2" height="1.3" fill="#c4c4c4"/>
<rect x="336.8" y="102.20" width="10.2" height="1.3" fill="#c4c4c4"/>
<rect x="336.8" y="104.75" width="10.2" height="1.3" fill="#c4c4c4"/>
<path d="M329,98.7 L335.6,98.7 L335.6,99.5 L329,99.5 Z" fill="#262627"/>
<path d="M62.6,127.19999999999999 L66.2,131.2 L73.4,121.0" fill="none" stroke="#d6d6d6" stroke-width="2.1"/>
<path d="M62.6,152.2 L66.2,156.2 L73.4,146.0" fill="none" stroke="#d6d6d6" stroke-width="2.1"/>
<path d="M62.6,177.2 L66.2,181.2 L73.4,171.0" fill="none" stroke="#d6d6d6" stroke-width="2.1"/>
<path d="M62.6,202.2 L66.2,206.2 L73.4,196.0" fill="none" stroke="#d6d6d6" stroke-width="2.1"/>
<path d="M62.6,227.2 L66.2,231.2 L73.4,221.0" fill="none" stroke="#d6d6d6" stroke-width="2.1"/>
<path d="M62.6,252.2 L66.2,256.2 L73.4,246.0" fill="none" stroke="#d6d6d6" stroke-width="2.1"/>
<path d="M62.6,277.20000000000005 L66.2,281.20000000000005 L73.4,271.0" fill="none" stroke="#d6d6d6" stroke-width="2.1"/>
<path d="M62.6,302.20000000000005 L66.2,306.20000000000005 L73.4,296.0" fill="none" stroke="#d6d6d6" stroke-width="2.1"/>
<path d="M62.6,327.20000000000005 L66.2,331.20000000000005 L73.4,321.0" fill="none" stroke="#d6d6d6" stroke-width="2.1"/>
<path d="M113.6,121 L121.6,127 L113.6,133 Z" fill="#e6e6e6"/>
<path d="M111,148 L123,148 L117,155.6 Z" fill="#e6e6e6"/>
<path d="M134,171.2 L142,177.2 L134,183.2 Z" fill="#e6e6e6"/>
<path d="M134,196.2 L142,202.2 L134,208.2 Z" fill="#e6e6e6"/>
<path d="M134,221.2 L142,227.2 L134,233.2 Z" fill="#e6e6e6"/>
<path d="M134,246.2 L142,252.2 L134,258.2 Z" fill="#e6e6e6"/>
<path d="M131.4,273 L143.4,273 L137.4,280.6 Z" fill="#e6e6e6"/>
<path d="M154,296 L162,302 L154,308 Z" fill="#e6e6e6"/>
<path d="M134,321.2 L142,327.2 L134,333.2 Z" fill="#e6e6e6"/>
<path d="M132.6,121.6 L133.6,119.2 L140.4,119.2 L141.4,121.2 L150.4,121.2 L150.4,133.2 L132.6,133.2 Z" fill="#c2c2c2"/>
<path d="M133.4,146.4 L134.4,144.2 L140.8,144.2 L141.8,146 L149.6,146 L149.6,148 L133.4,148 Z" fill="#a0a0a0"/><path d="M131.4,149 L151.8,149 L150,158.4 L133,158.4 Z" fill="#c6c6c6"/>
<circle cx="162" cy="377.6" r="6" fill="#7b7b7c"/>
<path d="M192,371.4 L204.4,377.6 L192,383.8 Z" fill="#7b7b7c"/>
<path d="M226,372.8 L227,370.6 L232.6,370.6 L233.8,372.6 L241,372.6 L241,383.6 L226,383.6 Z" fill="#c4c4c4"/>
<path d="M267,370.8 L280,370.8 L280,383.8 L273,383.8 L273,377.8 L267,377.8 Z" fill="#c8c8c8"/><path d="M268,379.40000000000003 L271.6,379.40000000000003 L271.6,383.2 Z" fill="#c8c8c8"/>
<g fill="#7c7c7d"><rect x="306.59999999999997" y="369.6" width="5.2" height="1.6"/><rect x="302.4" y="371.6" width="13.6" height="2.2"/><path d="M303.4,374.8 L315.0,374.8 L314.0,384.20000000000005 L304.4,384.20000000000005 Z"/></g><path d="M306.59999999999997,376.20000000000005 v6.8 M309.2,376.20000000000005 v6.8 M311.79999999999995,376.20000000000005 v6.8" stroke="#535354" stroke-width="1.1"/>
<path d="M329,400.8 L335.6,400.8 L332.3,404.6 Z" fill="#c4c4c4"/>
<rect x="336.8" y="397.80" width="10.2" height="9.6" fill="#262627"/>
<rect x="336.8" y="398.40" width="10.2" height="1.3" fill="#c4c4c4"/>
<rect x="336.8" y="400.95" width="10.2" height="1.3" fill="#c4c4c4"/>
<rect x="336.8" y="403.50" width="10.2" height="1.3" fill="#c4c4c4"/>
<rect x="336.8" y="406.05" width="10.2" height="1.3" fill="#c4c4c4"/>
<path d="M329,400.0 L335.6,400.0 L335.6,400.8 L329,400.8 Z" fill="#262627"/>
<path d="M186.6,432 A5.4,5.4 0 1 0 181.4,425.2" fill="none" stroke="#8a8a8b" stroke-width="1.6"/><path d="M177.6,425.4 L185,425.4 L181.2,430.4 Z" fill="#8a8a8b" transform="rotate(-14 181.4 427)"/><rect x="174.4" y="435.4" width="15.6" height="1.2" fill="#7e7e7f"/>
<g transform="translate(289.6,431.6)"><path d="M0,2.5 L0.8,0.3 L7.6,0.3 L9,2.8 L20,2.8 L20,20.6 L0,20.6 Z" fill="#c4c4c4"/><path d="M0,20 L20,20 L20,20.8 L0,20.8Z" fill="#9a9a9a"/><path d="M9.1,5 L10.9,5 L11.4,12.8 L8.6,12.8 Z" fill="#2c2c2c"/><path d="M3.6,8.8 C3.8,6.8 5.2,6 6.2,6.2 C7.4,7 7.6,9 7.4,10.4 L8.8,12.4 L7.8,13 L6,10.8 C5,10.8 4,10 3.6,8.8 Z" fill="#2c2c2c"/><path d="M16.4,8.8 C16.2,6.8 14.8,6 13.8,6.2 C12.6,7 12.4,9 12.6,10.4 L11.2,12.4 L12.2,13 L14,10.8 C15,10.8 16,10 16.4,8.8 Z" fill="#2c2c2c"/><path d="M7.6,13 L12.4,13 L12.4,17.6 L7.6,17.6 Z M9,14.6 L9,16.2 L11,16.2 L11,14.6 Z" fill="#2c2c2c" fill-rule="evenodd"/></g>
<path d="M112.4,454.4 L119,462.6 C119,465 117.6,466 116,466 L108.8,466 C107.2,466 105.8,465 105.8,462.6 Z" fill="#a8a8a9" stroke="#3e3e3f" stroke-width=".8"/>
<path d="M337.2,484.4 L344.2,484.4 L340.7,480.8 Z" fill="#e0e0e0"/>
<path d="M337.2,733.8 L344.2,733.8 L340.7,737.6 Z" fill="#e0e0e0"/>
<ellipse cx="194" cy="760" rx="7" ry="4" fill="none" stroke="#777778" stroke-width="1.5"/><circle cx="194" cy="760" r="1.6" fill="#777778"/><path d="M207.6,754.6 L208.8,755.8 L202.6,763.4 L200.8,762 Z" fill="#777778"/><path d="M200.4,762.4 L202.2,764 C201,766.6 198,767.4 195.6,766.8 C197.8,766.2 199,764.4 200.4,762.4 Z" fill="#777778"/>
<g><rect x="225" y="754.4" width="15" height="12.6" fill="#cacaca"/><path d="M227,756.2 h2.6 v2.4 h-2.6z M231,756.2 h2.6 v2.4 h-2.6z M235,756.2 h3.2 v2.4 h-3.2z M227,760.2 h6.6 v1.4 h-6.6z M227,763.2 h9 v1.6 h-9z M235.4,760.2 l2.8,0 l0,2.6 z" fill="#444445"/></g>
<path d="M266,754.8 L279,754.8 L279,767.8 L272,767.8 L272,761.8 L266,761.8 Z" fill="#c8c8c8"/><path d="M267,763.4 L270.6,763.4 L270.6,767.1999999999999 Z" fill="#c8c8c8"/>
<g fill="#c8c8c8"><rect x="305.2" y="753.4" width="5.2" height="1.6"/><rect x="301" y="755.4" width="13.6" height="2.2"/><path d="M302,758.6 L313.6,758.6 L312.6,768.0 L303,768.0 Z"/></g><path d="M305.2,760.0 v6.8 M307.8,760.0 v6.8 M310.4,760.0 v6.8" stroke="#535354" stroke-width="1.1"/>
<path d="M329,784.2 L335.6,784.2 L332.3,788.0 Z" fill="#c4c4c4"/>
<rect x="336.8" y="781.20" width="10.2" height="9.6" fill="#262627"/>
<rect x="336.8" y="781.80" width="10.2" height="1.3" fill="#c4c4c4"/>
<rect x="336.8" y="784.35" width="10.2" height="1.3" fill="#c4c4c4"/>
<rect x="336.8" y="786.90" width="10.2" height="1.3" fill="#c4c4c4"/>
<rect x="336.8" y="789.45" width="10.2" height="1.3" fill="#c4c4c4"/>
<path d="M329,783.4000000000001 L335.6,783.4000000000001 L335.6,784.2 L329,784.2 Z" fill="#262627"/>
<g transform="translate(61,826.6) scale(.66)"><path d="M22.6,-17.1 L24.2,-15.4 L13.2,-2.4 L10.2,-5.2 Z" fill="#c6c6c6"/><path d="M9.6,-4.6 L12.6,-1.8 C12.8,1.6 9.2,3.4 5.6,3 C3.2,2.8 1.4,2.2 0,0.6 C3,0.4 5.6,-1.2 6.8,-3 C7.6,-4.2 8.6,-4.8 9.6,-4.6 Z" fill="#c6c6c6"/></g>
<path d="M61,818.2 L65,814 L65.2,815.6 C67,815 69.6,814.6 71.4,815 C69.2,815.4 67.2,816.4 65.8,817.6 L66.4,819.2 Z" fill="#c6c6c6"/>
<path d="M75.4,819.2 L75.4,824.2 L72.6,826" fill="none" stroke="#d0d0d0" stroke-width="1.1" stroke-dasharray="1.1,1.4"/>
<path d="M93.4,854.4 L104.6,854.4 L104.6,856.6 L110.2,856.6 L110.2,872.6 L93.4,872.6 Z" fill="#5a687f" stroke="#cfcfcf" stroke-width="1.2"/><path d="M96,860.2 h11.4 M96,863 h11.4 M96,865.8 h11.4 M96,868.6 h11.4" stroke="#d6d6d6" stroke-width="1.1"/>
<g fill="#cacaca"><path d="M232.6,972.6 L239.4,972.6 L243,976 L243,985.6 L232.6,985.6 L232.6,981.8 L236.8,981.8 L236.8,977.8 L232.6,977.8 Z"/><path d="M225,980.8 L228.6,980.8 L228.6,977.2 L231,977.2 L231,980.8 L234.6,980.8 L234.6,983.2 L231,983.2 L231,986.8 L228.6,986.8 L228.6,983.2 L225,983.2 Z"/></g><path d="M239.2,973 L239.2,976.4 L242.6,976.4" fill="none" stroke="#535354" stroke-width="1"/>
<g><path d="M264.4,976.6 L269,976.6 L270.4,974 L277,974 L278.4,976.6 L282.6,976.6 L282.6,987 L264.4,987 Z" fill="#cacaca"/><circle cx="273.6" cy="981.6" r="3.6" fill="#4c4c4d"/><circle cx="273.6" cy="981.6" r="1.7" fill="#cacaca"/></g>
<g fill="#c8c8c8"><rect x="306.59999999999997" y="972.2" width="5.2" height="1.6"/><rect x="302.4" y="974.2" width="13.6" height="2.2"/><path d="M303.4,977.4000000000001 L315.0,977.4000000000001 L314.0,986.8000000000001 L304.4,986.8000000000001 Z"/></g><path d="M306.59999999999997,978.8000000000001 v6.8 M309.2,978.8000000000001 v6.8 M311.79999999999995,978.8000000000001 v6.8" stroke="#535354" stroke-width="1.1"/>
<path d="M329,1003.6 L335.6,1003.6 L332.3,1007.4 Z" fill="#c4c4c4"/>
<rect x="336.8" y="1000.60" width="10.2" height="9.6" fill="#262627"/>
<rect x="336.8" y="1001.20" width="10.2" height="1.3" fill="#c4c4c4"/>
<rect x="336.8" y="1003.75" width="10.2" height="1.3" fill="#c4c4c4"/>
<rect x="336.8" y="1006.30" width="10.2" height="1.3" fill="#c4c4c4"/>
<rect x="336.8" y="1008.85" width="10.2" height="1.3" fill="#c4c4c4"/>
<path d="M329,1002.8000000000001 L335.6,1002.8000000000001 L335.6,1003.6 L329,1003.6 Z" fill="#262627"/>
<path d="M68,1022 L149,1022 L68,1109 Z" fill="#000"/>
<path d="M250,1022 L332.6,1022 L332.6,1098 Z" fill="#fff"/>
<path d="M179,1025.6 L179,1034 L167,1029.8 Z M219.6,1025.6 L219.6,1034 L231.6,1029.8 Z" fill="#858586"/>
<circle cx="200" cy="1029.6" r="4.2" fill="#3a3a3b" stroke="#8c8c8d" stroke-width="1.6"/>
<defs><linearGradient id="tgr" x1="159" y1="0" x2="289" y2="0" gradientUnits="userSpaceOnUse"><stop offset="0" stop-color="#ff1c00" stop-opacity="0"/><stop offset="1" stop-color="#ff1c00" stop-opacity="1"/></linearGradient><linearGradient id="tgw" x1="159" y1="1083" x2="221.85" y2="1194.61" gradientUnits="userSpaceOnUse"><stop offset="0" stop-color="#ffffff" stop-opacity="1"/><stop offset="1" stop-color="#ffffff" stop-opacity="0"/></linearGradient></defs>
<g style="isolation:isolate"><path d="M159,1083 L289,1156.8 L159,1230 Z" fill="#000"/><path d="M159,1083 L289,1156.8 L159,1230 Z" fill="url(#tgr)" style="mix-blend-mode:plus-lighter"/><path d="M159,1083 L289,1156.8 L159,1230 Z" fill="url(#tgw)" style="mix-blend-mode:plus-lighter"/></g>
<circle cx="112.6" cy="1105" r="8.2" fill="#ff2000" stroke="#111" stroke-width="3.6"/><circle cx="112.6" cy="1105" r="7.6" fill="none" stroke="#f2dede" stroke-width="1.8"/>
<circle cx="159.2" cy="1230.2" r="6.3" fill="#101010"/><circle cx="159.2" cy="1230.2" r="3.8" fill="#1c1c1c" stroke="#c6c6c6" stroke-width="2.2"/>
<path d="M338,1029.6 L346.6,1029.6 L342.3,1024 Z" fill="#111"/>
<path d="M338,1259 L346.6,1259 L342.3,1264.6 Z" fill="#111"/>
<path d="M66.4,1276.2 L66.4,1285 L60.6,1280.6 Z" fill="#111"/>
<path d="M318.4,1276.2 L318.4,1285 L324.2,1280.6 Z" fill="#111"/>
<circle cx="430" cy="1281" r="6.6" fill="#5a5a5c" stroke="#8a8a8c" stroke-width="1.4"/><path d="M427.6,1277.6 L431.4,1277.6 L433,1279.4 L433,1284.4 L427.6,1284.4 Z" fill="#a8a8aa"/>
<path d="M661,1276 L669,1281 L661,1286 Z" fill="#c4c4c4"/>
<path d="M889.5,503.5 L930.5,503.5 L930.5,502.5 L952.5,502.5 L952.5,533.5 L953.5,533.5 L953.5,564.5 L921.5,564.5 L921.5,565.5 L890.5,565.5 L890.5,525.5 L889.5,525.5 Z" fill="none" stroke="#b9b9b9" stroke-width="3" stroke-linejoin="round"/><path d="M889.5,503.5 L930.5,503.5 L930.5,502.5 L952.5,502.5 L952.5,533.5 L953.5,533.5 L953.5,564.5 L921.5,564.5 L921.5,565.5 L890.5,565.5 L890.5,525.5 L889.5,525.5 Z" fill="none" stroke="#ffffff" stroke-width="1" stroke-linejoin="round"/>
<path d="M917,534.5 L926,534.5 M921.5,530 L921.5,539" stroke="#a0a0a0" stroke-width="1"/>
<g fill="none" stroke="#e8e8e8" stroke-width="1.4"><path d="M64.4,474.6 L70.4,474.6 M68,474.8 C66.6,480 67.6,486.4 71.6,488.4 M78.6,474.6 L84.6,474.6 M81,474.8 C82.4,480 81.4,486.4 77.4,488.4"/><circle cx="74.6" cy="486.4" r="1.5"/><path d="M74.6,474 v1.6 M74.6,478.4 v1.6" stroke-width="1.3"/></g>
<g fill="none" stroke="#e8e8e8" stroke-width="1.5"><path d="M64,527.6 L70.6,527.6 C65.4,524 64.6,516.8 68.6,513.2 C72,510.2 77.2,510.2 80.6,513.2 C84.6,516.8 83.8,524 78.6,527.6 L85,527.6"/><path d="M70.4,515.6 L74.6,525 L78.8,515.6"/></g>
<g fill="none" stroke="#e8e8e8" stroke-width="1.4"><path d="M66.6,550.6 C70.4,553 70.2,558 67,561.4 C65.4,563.2 66,565.6 68.4,567.6 M82.6,550.6 C78.8,553 79,558 82.2,561.4 C83.8,563.2 83.2,565.6 80.8,567.6"/><path d="M71.6,548 L74.6,551 L77.6,548 M70,562.4 C71.4,565.6 73.2,567 74.6,567.4 C76,567 77.8,565.6 79.2,562.4 M74.6,567.4 v4"/></g>
<g fill="none" stroke="#ffffff" stroke-opacity="0.72" stroke-width="1.55" filter="url(#bl2)"><path d="M-2.4,-7.0 L-2.4,4.6 A2.4,2.4 0 0 0 2.4,4.6 L2.4,-7.0 M-4,-5.8 L-1.4,-5.8 M1.4,-5.8 L4,-5.8" transform="translate(101.5,485.8) rotate(-9.9)"/><path d="M-2.4,-8.0 L-2.4,5.6 A2.4,2.4 0 0 0 2.4,5.6 L2.4,-8.0 M-4,-6.8 L-1.4,-6.8 M1.4,-6.8 L4,-6.8" transform="translate(105.6,485.1) rotate(-9.6)"/><path d="M-2.4,-8.8 L-2.4,6.3 A2.4,2.4 0 0 0 2.4,6.3 L2.4,-8.8 M-4,-7.5 L-1.4,-7.5 M1.4,-7.5 L4,-7.5" transform="translate(109.7,484.4) rotate(-9.1)"/><path d="M-2.4,-8.8 L-2.4,6.3 A2.4,2.4 0 0 0 2.4,6.3 L2.4,-8.8 M-4,-7.5 L-1.4,-7.5 M1.4,-7.5 L4,-7.5" transform="translate(113.8,483.8) rotate(-8.5)"/><path d="M-2.4,-8.8 L-2.4,6.3 A2.4,2.4 0 0 0 2.4,6.3 L2.4,-8.8 M-4,-7.5 L-1.4,-7.5 M1.4,-7.5 L4,-7.5" transform="translate(118.0,483.2) rotate(-7.7)"/><path d="M-2.4,-8.8 L-2.4,6.3 A2.4,2.4 0 0 0 2.4,6.3 L2.4,-8.8 M-4,-7.5 L-1.4,-7.5 M1.4,-7.5 L4,-7.5" transform="translate(122.1,482.7) rotate(-6.7)"/><path d="M-2.4,-8.8 L-2.4,6.3 A2.4,2.4 0 0 0 2.4,6.3 L2.4,-8.8 M-4,-7.5 L-1.4,-7.5 M1.4,-7.5 L4,-7.5" transform="translate(126.2,482.3) rotate(-5.7)"/><path d="M-2.4,-8.8 L-2.4,6.3 A2.4,2.4 0 0 0 2.4,6.3 L2.4,-8.8 M-4,-7.5 L-1.4,-7.5 M1.4,-7.5 L4,-7.5" transform="translate(130.3,481.9) rotate(-4.6)"/><path d="M-2.4,-8.8 L-2.4,6.3 A2.4,2.4 0 0 0 2.4,6.3 L2.4,-8.8 M-4,-7.5 L-1.4,-7.5 M1.4,-7.5 L4,-7.5" transform="translate(134.4,481.6) rotate(-3.3)"/><path d="M-2.4,-8.8 L-2.4,6.3 A2.4,2.4 0 0 0 2.4,6.3 L2.4,-8.8 M-4,-7.5 L-1.4,-7.5 M1.4,-7.5 L4,-7.5" transform="translate(138.5,481.4) rotate(-2.0)"/><path d="M-2.4,-8.8 L-2.4,6.3 A2.4,2.4 0 0 0 2.4,6.3 L2.4,-8.8 M-4,-7.5 L-1.4,-7.5 M1.4,-7.5 L4,-7.5" transform="translate(142.6,481.3) rotate(-0.7)"/><path d="M-2.4,-8.8 L-2.4,6.3 A2.4,2.4 0 0 0 2.4,6.3 L2.4,-8.8 M-4,-7.5 L-1.4,-7.5 M1.4,-7.5 L4,-7.5" transform="translate(146.8,481.3) rotate(0.7)"/><path d="M-2.4,-8.8 L-2.4,6.3 A2.4,2.4 0 0 0 2.4,6.3 L2.4,-8.8 M-4,-7.5 L-1.4,-7.5 M1.4,-7.5 L4,-7.5" transform="translate(150.9,481.4) rotate(2.0)"/><path d="M-2.4,-8.8 L-2.4,6.3 A2.4,2.4 0 0 0 2.4,6.3 L2.4,-8.8 M-4,-7.5 L-1.4,-7.5 M1.4,-7.5 L4,-7.5" transform="translate(155.0,481.6) rotate(3.3)"/><path d="M-2.4,-8.8 L-2.4,6.3 A2.4,2.4 0 0 0 2.4,6.3 L2.4,-8.8 M-4,-7.5 L-1.4,-7.5 M1.4,-7.5 L4,-7.5" transform="translate(159.1,481.9) rotate(4.5)"/><path d="M-2.4,-8.8 L-2.4,6.3 A2.4,2.4 0 0 0 2.4,6.3 L2.4,-8.8 M-4,-7.5 L-1.4,-7.5 M1.4,-7.5 L4,-7.5" transform="translate(163.2,482.2) rotate(5.7)"/><path d="M-2.4,-8.8 L-2.4,6.3 A2.4,2.4 0 0 0 2.4,6.3 L2.4,-8.8 M-4,-7.5 L-1.4,-7.5 M1.4,-7.5 L4,-7.5" transform="translate(167.3,482.7) rotate(6.7)"/><path d="M-2.4,-8.8 L-2.4,6.3 A2.4,2.4 0 0 0 2.4,6.3 L2.4,-8.8 M-4,-7.5 L-1.4,-7.5 M1.4,-7.5 L4,-7.5" transform="translate(171.4,483.2) rotate(7.6)"/><path d="M-2.4,-8.8 L-2.4,6.3 A2.4,2.4 0 0 0 2.4,6.3 L2.4,-8.8 M-4,-7.5 L-1.4,-7.5 M1.4,-7.5 L4,-7.5" transform="translate(175.5,483.8) rotate(8.4)"/><path d="M-2.4,-8.8 L-2.4,6.3 A2.4,2.4 0 0 0 2.4,6.3 L2.4,-8.8 M-4,-7.5 L-1.4,-7.5 M1.4,-7.5 L4,-7.5" transform="translate(179.7,484.4) rotate(9.1)"/><path d="M-2.4,-8.8 L-2.4,6.3 A2.4,2.4 0 0 0 2.4,6.3 L2.4,-8.8 M-4,-7.5 L-1.4,-7.5 M1.4,-7.5 L4,-7.5" transform="translate(183.8,485.1) rotate(9.6)"/><path d="M-2.4,-8.8 L-2.4,6.3 A2.4,2.4 0 0 0 2.4,6.3 L2.4,-8.8 M-4,-7.5 L-1.4,-7.5 M1.4,-7.5 L4,-7.5" transform="translate(187.9,485.8) rotate(9.9)"/><path d="M-2.4,-8.8 L-2.4,6.3 A2.4,2.4 0 0 0 2.4,6.3 L2.4,-8.8 M-4,-7.5 L-1.4,-7.5 M1.4,-7.5 L4,-7.5" transform="translate(192.0,486.5) rotate(10.0)"/><path d="M-2.4,-8.8 L-2.4,6.3 A2.4,2.4 0 0 0 2.4,6.3 L2.4,-8.8 M-4,-7.5 L-1.4,-7.5 M1.4,-7.5 L4,-7.5" transform="translate(196.1,487.3) rotate(10.0)"/><path d="M-2.4,-8.8 L-2.4,6.3 A2.4,2.4 0 0 0 2.4,6.3 L2.4,-8.8 M-4,-7.5 L-1.4,-7.5 M1.4,-7.5 L4,-7.5" transform="translate(200.2,488.0) rotate(9.8)"/><path d="M-2.4,-8.8 L-2.4,6.3 A2.4,2.4 0 0 0 2.4,6.3 L2.4,-8.8 M-4,-7.5 L-1.4,-7.5 M1.4,-7.5 L4,-7.5" transform="translate(204.3,488.7) rotate(9.5)"/><path d="M-2.4,-8.8 L-2.4,6.3 A2.4,2.4 0 0 0 2.4,6.3 L2.4,-8.8 M-4,-7.5 L-1.4,-7.5 M1.4,-7.5 L4,-7.5" transform="translate(208.5,489.3) rotate(8.9)"/><path d="M-2.4,-8.8 L-2.4,6.3 A2.4,2.4 0 0 0 2.4,6.3 L2.4,-8.8 M-4,-7.5 L-1.4,-7.5 M1.4,-7.5 L4,-7.5" transform="translate(212.6,490.0) rotate(8.2)"/><path d="M-2.4,-8.8 L-2.4,6.3 A2.4,2.4 0 0 0 2.4,6.3 L2.4,-8.8 M-4,-7.5 L-1.4,-7.5 M1.4,-7.5 L4,-7.5" transform="translate(216.7,490.5) rotate(7.4)"/><path d="M-2.4,-8.8 L-2.4,6.3 A2.4,2.4 0 0 0 2.4,6.3 L2.4,-8.8 M-4,-7.5 L-1.4,-7.5 M1.4,-7.5 L4,-7.5" transform="translate(220.8,491.0) rotate(6.4)"/><path d="M-2.4,-8.8 L-2.4,6.3 A2.4,2.4 0 0 0 2.4,6.3 L2.4,-8.8 M-4,-7.5 L-1.4,-7.5 M1.4,-7.5 L4,-7.5" transform="translate(224.9,491.5) rotate(5.4)"/><path d="M-2.4,-8.8 L-2.4,6.3 A2.4,2.4 0 0 0 2.4,6.3 L2.4,-8.8 M-4,-7.5 L-1.4,-7.5 M1.4,-7.5 L4,-7.5" transform="translate(229.0,491.8) rotate(4.2)"/><path d="M-2.4,-8.8 L-2.4,6.3 A2.4,2.4 0 0 0 2.4,6.3 L2.4,-8.8 M-4,-7.5 L-1.4,-7.5 M1.4,-7.5 L4,-7.5" transform="translate(233.1,492.1) rotate(2.9)"/><path d="M-2.4,-8.8 L-2.4,6.3 A2.4,2.4 0 0 0 2.4,6.3 L2.4,-8.8 M-4,-7.5 L-1.4,-7.5 M1.4,-7.5 L4,-7.5" transform="translate(237.2,492.2) rotate(1.6)"/><path d="M-2.4,-8.8 L-2.4,6.3 A2.4,2.4 0 0 0 2.4,6.3 L2.4,-8.8 M-4,-7.5 L-1.4,-7.5 M1.4,-7.5 L4,-7.5" transform="translate(241.4,492.3) rotate(0.3)"/><path d="M-2.4,-8.8 L-2.4,6.3 A2.4,2.4 0 0 0 2.4,6.3 L2.4,-8.8 M-4,-7.5 L-1.4,-7.5 M1.4,-7.5 L4,-7.5" transform="translate(245.5,492.3) rotate(-1.1)"/><path d="M-2.4,-8.8 L-2.4,6.3 A2.4,2.4 0 0 0 2.4,6.3 L2.4,-8.8 M-4,-7.5 L-1.4,-7.5 M1.4,-7.5 L4,-7.5" transform="translate(249.6,492.1) rotate(-2.4)"/><path d="M-2.4,-8.8 L-2.4,6.3 A2.4,2.4 0 0 0 2.4,6.3 L2.4,-8.8 M-4,-7.5 L-1.4,-7.5 M1.4,-7.5 L4,-7.5" transform="translate(253.7,491.9) rotate(-3.7)"/><path d="M-2.4,-8.8 L-2.4,6.3 A2.4,2.4 0 0 0 2.4,6.3 L2.4,-8.8 M-4,-7.5 L-1.4,-7.5 M1.4,-7.5 L4,-7.5" transform="translate(257.8,491.6) rotate(-4.9)"/><path d="M-2.4,-8.8 L-2.4,6.3 A2.4,2.4 0 0 0 2.4,6.3 L2.4,-8.8 M-4,-7.5 L-1.4,-7.5 M1.4,-7.5 L4,-7.5" transform="translate(261.9,491.2) rotate(-6.0)"/><path d="M-2.4,-8.8 L-2.4,6.3 A2.4,2.4 0 0 0 2.4,6.3 L2.4,-8.8 M-4,-7.5 L-1.4,-7.5 M1.4,-7.5 L4,-7.5" transform="translate(266.0,490.8) rotate(-7.0)"/><path d="M-2.4,-8.8 L-2.4,6.3 A2.4,2.4 0 0 0 2.4,6.3 L2.4,-8.8 M-4,-7.5 L-1.4,-7.5 M1.4,-7.5 L4,-7.5" transform="translate(270.2,490.2) rotate(-7.9)"/><path d="M-2.4,-8.8 L-2.4,6.3 A2.4,2.4 0 0 0 2.4,6.3 L2.4,-8.8 M-4,-7.5 L-1.4,-7.5 M1.4,-7.5 L4,-7.5" transform="translate(274.3,489.6) rotate(-8.6)"/><path d="M-2.4,-8.0 L-2.4,5.6 A2.4,2.4 0 0 0 2.4,5.6 L2.4,-8.0 M-4,-6.8 L-1.4,-6.8 M1.4,-6.8 L4,-6.8" transform="translate(278.4,489.0) rotate(-9.2)"/><path d="M-2.4,-7.0 L-2.4,4.6 A2.4,2.4 0 0 0 2.4,4.6 L2.4,-7.0 M-4,-5.8 L-1.4,-5.8 M1.4,-5.8 L4,-5.8" transform="translate(282.5,488.3) rotate(-9.7)"/></g>
<path d="M101.5,478.8 L105.6,477.1 L109.7,475.7 L113.8,475.1 L118.0,474.5 L122.1,474.0 L126.2,473.5 L130.3,473.1 L134.4,472.9 L138.5,472.7 L142.6,472.6 L146.8,472.6 L150.9,472.7 L155.0,472.8 L159.1,473.1 L163.2,473.5 L167.3,473.9 L171.4,474.5 L175.5,475.0 L179.7,475.7 L183.8,476.4 L187.9,477.1 L192.0,477.8 L196.1,478.5 L200.2,479.2 L204.3,479.9 L208.5,480.6 L212.6,481.2 L216.7,481.8 L220.8,482.3 L224.9,482.7 L229.0,483.1 L233.1,483.3 L237.2,483.5 L241.4,483.5 L245.5,483.5 L249.6,483.4 L253.7,483.2 L257.8,482.9 L261.9,482.5 L266.0,482.0 L270.2,481.5 L274.3,480.9 L278.4,481.0 L282.5,481.3 L282.5,495.3 L278.4,497.0 L274.3,498.4 L270.2,499.0 L266.0,499.5 L261.9,500.0 L257.8,500.4 L253.7,500.7 L249.6,500.9 L245.5,501.0 L241.4,501.0 L237.2,501.0 L233.1,500.8 L229.0,500.6 L224.9,500.2 L220.8,499.8 L216.7,499.3 L212.6,498.7 L208.5,498.1 L204.3,497.4 L200.2,496.7 L196.1,496.0 L192.0,495.3 L187.9,494.6 L183.8,493.9 L179.7,493.2 L175.5,492.5 L171.4,492.0 L167.3,491.4 L163.2,491.0 L159.1,490.6 L155.0,490.3 L150.9,490.2 L146.8,490.1 L142.6,490.1 L138.5,490.2 L134.4,490.4 L130.3,490.6 L126.2,491.0 L122.1,491.5 L118.0,492.0 L113.8,492.6 L109.7,493.2 L105.6,493.1 L101.5,492.8 Z" fill="#ffffff" fill-opacity=".28" filter="url(#bl2)"/>
<path d="M101.5,482.7 L105.6,481.5 L109.7,480.5 L113.8,479.9 L118.0,479.3 L122.1,478.8 L126.2,478.3 L130.3,477.9 L134.4,477.7 L138.5,477.5 L142.6,477.4 L146.8,477.4 L150.9,477.5 L155.0,477.7 L159.1,477.9 L163.2,478.3 L167.3,478.8 L171.4,479.3 L175.5,479.9 L179.7,480.5 L183.8,481.2 L187.9,481.9 L192.0,482.6 L196.1,483.3 L200.2,484.0 L204.3,484.7 L208.5,485.4 L212.6,486.0 L216.7,486.6 L220.8,487.1 L224.9,487.5 L229.0,487.9 L233.1,488.1 L237.2,488.3 L241.4,488.4 L245.5,488.3 L249.6,488.2 L253.7,488.0 L257.8,487.7 L261.9,487.3 L266.0,486.8 L270.2,486.3 L274.3,485.7 L278.4,485.4 L282.5,485.1" fill="none" stroke="#ffffff" stroke-opacity=".38" stroke-width="3.2" filter="url(#bl2)"/>
<g fill="none" stroke="#ffffff" stroke-opacity="0.62" stroke-width="1.55" filter="url(#bl2)"><path d="M-4.6,7.6 L-2,7.6 C-5.4,2.3 -4,-7.6 0,-7.6 C4,-7.6 5.4,2.3 2,7.6 L4.6,7.6" transform="translate(101.0,525.5) rotate(-9.9)"/><path d="M-4.6,8.6 L-2,8.6 C-5.4,2.6 -4,-8.6 0,-8.6 C4,-8.6 5.4,2.6 2,8.6 L4.6,8.6" transform="translate(104.7,524.9) rotate(-9.7)"/><path d="M-4.6,9.5 L-2,9.5 C-5.4,2.9 -4,-9.5 0,-9.5 C4,-9.5 5.4,2.9 2,9.5 L4.6,9.5" transform="translate(108.3,524.3) rotate(-9.3)"/><path d="M-4.6,9.5 L-2,9.5 C-5.4,2.9 -4,-9.5 0,-9.5 C4,-9.5 5.4,2.9 2,9.5 L4.6,9.5" transform="translate(112.0,523.7) rotate(-8.8)"/><path d="M-4.6,9.5 L-2,9.5 C-5.4,2.9 -4,-9.5 0,-9.5 C4,-9.5 5.4,2.9 2,9.5 L4.6,9.5" transform="translate(115.7,523.1) rotate(-8.1)"/><path d="M-4.6,9.5 L-2,9.5 C-5.4,2.9 -4,-9.5 0,-9.5 C4,-9.5 5.4,2.9 2,9.5 L4.6,9.5" transform="translate(119.4,522.6) rotate(-7.4)"/><path d="M-4.6,9.5 L-2,9.5 C-5.4,2.9 -4,-9.5 0,-9.5 C4,-9.5 5.4,2.9 2,9.5 L4.6,9.5" transform="translate(123.0,522.2) rotate(-6.5)"/><path d="M-4.6,9.5 L-2,9.5 C-5.4,2.9 -4,-9.5 0,-9.5 C4,-9.5 5.4,2.9 2,9.5 L4.6,9.5" transform="translate(126.7,521.8) rotate(-5.6)"/><path d="M-4.6,9.5 L-2,9.5 C-5.4,2.9 -4,-9.5 0,-9.5 C4,-9.5 5.4,2.9 2,9.5 L4.6,9.5" transform="translate(130.4,521.5) rotate(-4.5)"/><path d="M-4.6,9.5 L-2,9.5 C-5.4,2.9 -4,-9.5 0,-9.5 C4,-9.5 5.4,2.9 2,9.5 L4.6,9.5" transform="translate(134.1,521.2) rotate(-3.4)"/><path d="M-4.6,9.5 L-2,9.5 C-5.4,2.9 -4,-9.5 0,-9.5 C4,-9.5 5.4,2.9 2,9.5 L4.6,9.5" transform="translate(137.7,521.0) rotate(-2.3)"/><path d="M-4.6,9.5 L-2,9.5 C-5.4,2.9 -4,-9.5 0,-9.5 C4,-9.5 5.4,2.9 2,9.5 L4.6,9.5" transform="translate(141.4,520.9) rotate(-1.1)"/><path d="M-4.6,9.5 L-2,9.5 C-5.4,2.9 -4,-9.5 0,-9.5 C4,-9.5 5.4,2.9 2,9.5 L4.6,9.5" transform="translate(145.1,520.9) rotate(0.1)"/><path d="M-4.6,9.5 L-2,9.5 C-5.4,2.9 -4,-9.5 0,-9.5 C4,-9.5 5.4,2.9 2,9.5 L4.6,9.5" transform="translate(148.8,520.9) rotate(1.3)"/><path d="M-4.6,9.5 L-2,9.5 C-5.4,2.9 -4,-9.5 0,-9.5 C4,-9.5 5.4,2.9 2,9.5 L4.6,9.5" transform="translate(152.4,521.1) rotate(2.5)"/><path d="M-4.6,9.5 L-2,9.5 C-5.4,2.9 -4,-9.5 0,-9.5 C4,-9.5 5.4,2.9 2,9.5 L4.6,9.5" transform="translate(156.1,521.3) rotate(3.6)"/><path d="M-4.6,9.5 L-2,9.5 C-5.4,2.9 -4,-9.5 0,-9.5 C4,-9.5 5.4,2.9 2,9.5 L4.6,9.5" transform="translate(159.8,521.5) rotate(4.7)"/><path d="M-4.6,9.5 L-2,9.5 C-5.4,2.9 -4,-9.5 0,-9.5 C4,-9.5 5.4,2.9 2,9.5 L4.6,9.5" transform="translate(163.4,521.9) rotate(5.7)"/><path d="M-4.6,9.5 L-2,9.5 C-5.4,2.9 -4,-9.5 0,-9.5 C4,-9.5 5.4,2.9 2,9.5 L4.6,9.5" transform="translate(167.1,522.3) rotate(6.7)"/><path d="M-4.6,9.5 L-2,9.5 C-5.4,2.9 -4,-9.5 0,-9.5 C4,-9.5 5.4,2.9 2,9.5 L4.6,9.5" transform="translate(170.8,522.7) rotate(7.5)"/><path d="M-4.6,9.5 L-2,9.5 C-5.4,2.9 -4,-9.5 0,-9.5 C4,-9.5 5.4,2.9 2,9.5 L4.6,9.5" transform="translate(174.5,523.2) rotate(8.2)"/><path d="M-4.6,9.5 L-2,9.5 C-5.4,2.9 -4,-9.5 0,-9.5 C4,-9.5 5.4,2.9 2,9.5 L4.6,9.5" transform="translate(178.1,523.8) rotate(8.9)"/><path d="M-4.6,9.5 L-2,9.5 C-5.4,2.9 -4,-9.5 0,-9.5 C4,-9.5 5.4,2.9 2,9.5 L4.6,9.5" transform="translate(181.8,524.4) rotate(9.4)"/><path d="M-4.6,9.5 L-2,9.5 C-5.4,2.9 -4,-9.5 0,-9.5 C4,-9.5 5.4,2.9 2,9.5 L4.6,9.5" transform="translate(185.5,525.0) rotate(9.7)"/><path d="M-4.6,9.5 L-2,9.5 C-5.4,2.9 -4,-9.5 0,-9.5 C4,-9.5 5.4,2.9 2,9.5 L4.6,9.5" transform="translate(189.2,525.6) rotate(10.0)"/><path d="M-4.6,9.5 L-2,9.5 C-5.4,2.9 -4,-9.5 0,-9.5 C4,-9.5 5.4,2.9 2,9.5 L4.6,9.5" transform="translate(192.8,526.3) rotate(10.0)"/><path d="M-4.6,9.5 L-2,9.5 C-5.4,2.9 -4,-9.5 0,-9.5 C4,-9.5 5.4,2.9 2,9.5 L4.6,9.5" transform="translate(196.5,526.9) rotate(10.0)"/><path d="M-4.6,9.5 L-2,9.5 C-5.4,2.9 -4,-9.5 0,-9.5 C4,-9.5 5.4,2.9 2,9.5 L4.6,9.5" transform="translate(200.2,527.6) rotate(9.8)"/><path d="M-4.6,9.5 L-2,9.5 C-5.4,2.9 -4,-9.5 0,-9.5 C4,-9.5 5.4,2.9 2,9.5 L4.6,9.5" transform="translate(203.9,528.2) rotate(9.5)"/><path d="M-4.6,9.5 L-2,9.5 C-5.4,2.9 -4,-9.5 0,-9.5 C4,-9.5 5.4,2.9 2,9.5 L4.6,9.5" transform="translate(207.5,528.8) rotate(9.1)"/><path d="M-4.6,9.5 L-2,9.5 C-5.4,2.9 -4,-9.5 0,-9.5 C4,-9.5 5.4,2.9 2,9.5 L4.6,9.5" transform="translate(211.2,529.4) rotate(8.5)"/><path d="M-4.6,9.5 L-2,9.5 C-5.4,2.9 -4,-9.5 0,-9.5 C4,-9.5 5.4,2.9 2,9.5 L4.6,9.5" transform="translate(214.9,529.9) rotate(7.8)"/><path d="M-4.6,9.5 L-2,9.5 C-5.4,2.9 -4,-9.5 0,-9.5 C4,-9.5 5.4,2.9 2,9.5 L4.6,9.5" transform="translate(218.6,530.4) rotate(7.0)"/><path d="M-4.6,9.5 L-2,9.5 C-5.4,2.9 -4,-9.5 0,-9.5 C4,-9.5 5.4,2.9 2,9.5 L4.6,9.5" transform="translate(222.2,530.8) rotate(6.1)"/><path d="M-4.6,9.5 L-2,9.5 C-5.4,2.9 -4,-9.5 0,-9.5 C4,-9.5 5.4,2.9 2,9.5 L4.6,9.5" transform="translate(225.9,531.2) rotate(5.1)"/><path d="M-4.6,9.5 L-2,9.5 C-5.4,2.9 -4,-9.5 0,-9.5 C4,-9.5 5.4,2.9 2,9.5 L4.6,9.5" transform="translate(229.6,531.4) rotate(4.0)"/><path d="M-4.6,9.5 L-2,9.5 C-5.4,2.9 -4,-9.5 0,-9.5 C4,-9.5 5.4,2.9 2,9.5 L4.6,9.5" transform="translate(233.2,531.7) rotate(2.9)"/><path d="M-4.6,9.5 L-2,9.5 C-5.4,2.9 -4,-9.5 0,-9.5 C4,-9.5 5.4,2.9 2,9.5 L4.6,9.5" transform="translate(236.9,531.8) rotate(1.7)"/><path d="M-4.6,9.5 L-2,9.5 C-5.4,2.9 -4,-9.5 0,-9.5 C4,-9.5 5.4,2.9 2,9.5 L4.6,9.5" transform="translate(240.6,531.9) rotate(0.5)"/><path d="M-4.6,9.5 L-2,9.5 C-5.4,2.9 -4,-9.5 0,-9.5 C4,-9.5 5.4,2.9 2,9.5 L4.6,9.5" transform="translate(244.3,531.9) rotate(-0.7)"/><path d="M-4.6,9.5 L-2,9.5 C-5.4,2.9 -4,-9.5 0,-9.5 C4,-9.5 5.4,2.9 2,9.5 L4.6,9.5" transform="translate(247.9,531.8) rotate(-1.9)"/><path d="M-4.6,9.5 L-2,9.5 C-5.4,2.9 -4,-9.5 0,-9.5 C4,-9.5 5.4,2.9 2,9.5 L4.6,9.5" transform="translate(251.6,531.7) rotate(-3.0)"/><path d="M-4.6,9.5 L-2,9.5 C-5.4,2.9 -4,-9.5 0,-9.5 C4,-9.5 5.4,2.9 2,9.5 L4.6,9.5" transform="translate(255.3,531.4) rotate(-4.1)"/><path d="M-4.6,9.5 L-2,9.5 C-5.4,2.9 -4,-9.5 0,-9.5 C4,-9.5 5.4,2.9 2,9.5 L4.6,9.5" transform="translate(259.0,531.1) rotate(-5.2)"/><path d="M-4.6,9.5 L-2,9.5 C-5.4,2.9 -4,-9.5 0,-9.5 C4,-9.5 5.4,2.9 2,9.5 L4.6,9.5" transform="translate(262.6,530.8) rotate(-6.2)"/><path d="M-4.6,9.5 L-2,9.5 C-5.4,2.9 -4,-9.5 0,-9.5 C4,-9.5 5.4,2.9 2,9.5 L4.6,9.5" transform="translate(266.3,530.3) rotate(-7.1)"/><path d="M-4.6,9.5 L-2,9.5 C-5.4,2.9 -4,-9.5 0,-9.5 C4,-9.5 5.4,2.9 2,9.5 L4.6,9.5" transform="translate(270.0,529.8) rotate(-7.9)"/><path d="M-4.6,9.5 L-2,9.5 C-5.4,2.9 -4,-9.5 0,-9.5 C4,-9.5 5.4,2.9 2,9.5 L4.6,9.5" transform="translate(273.7,529.3) rotate(-8.5)"/><path d="M-4.6,8.6 L-2,8.6 C-5.4,2.6 -4,-8.6 0,-8.6 C4,-8.6 5.4,2.6 2,8.6 L4.6,8.6" transform="translate(277.3,528.7) rotate(-9.1)"/><path d="M-4.6,7.6 L-2,7.6 C-5.4,2.3 -4,-7.6 0,-7.6 C4,-7.6 5.4,2.3 2,7.6 L4.6,7.6" transform="translate(281.0,528.1) rotate(-9.5)"/></g>
<path d="M101.0,517.9 L104.7,516.3 L108.3,514.8 L112.0,514.2 L115.7,513.6 L119.4,513.1 L123.0,512.7 L126.7,512.3 L130.4,512.0 L134.1,511.7 L137.7,511.5 L141.4,511.4 L145.1,511.4 L148.8,511.4 L152.4,511.6 L156.1,511.8 L159.8,512.0 L163.4,512.4 L167.1,512.8 L170.8,513.2 L174.5,513.7 L178.1,514.3 L181.8,514.9 L185.5,515.5 L189.2,516.1 L192.8,516.8 L196.5,517.4 L200.2,518.1 L203.9,518.7 L207.5,519.3 L211.2,519.9 L214.9,520.4 L218.6,520.9 L222.2,521.3 L225.9,521.7 L229.6,521.9 L233.2,522.2 L236.9,522.3 L240.6,522.4 L244.3,522.4 L247.9,522.3 L251.6,522.2 L255.3,521.9 L259.0,521.6 L262.6,521.3 L266.3,520.8 L270.0,520.3 L273.7,519.8 L277.3,520.2 L281.0,520.5 L281.0,535.7 L277.3,537.3 L273.7,538.8 L270.0,539.3 L266.3,539.8 L262.6,540.3 L259.0,540.6 L255.3,540.9 L251.6,541.2 L247.9,541.3 L244.3,541.4 L240.6,541.4 L236.9,541.3 L233.2,541.2 L229.6,540.9 L225.9,540.7 L222.2,540.3 L218.6,539.9 L214.9,539.4 L211.2,538.9 L207.5,538.3 L203.9,537.7 L200.2,537.1 L196.5,536.4 L192.8,535.8 L189.2,535.1 L185.5,534.5 L181.8,533.9 L178.1,533.3 L174.5,532.7 L170.8,532.2 L167.1,531.8 L163.4,531.4 L159.8,531.0 L156.1,530.8 L152.4,530.6 L148.8,530.4 L145.1,530.4 L141.4,530.4 L137.7,530.5 L134.1,530.7 L130.4,531.0 L126.7,531.3 L123.0,531.7 L119.4,532.1 L115.7,532.6 L112.0,533.2 L108.3,533.8 L104.7,533.5 L101.0,533.1 Z" fill="#ffffff" fill-opacity=".28" filter="url(#bl2)"/>
<path d="M101.0,517.9 L104.7,516.3 L108.3,514.8 L112.0,514.2 L115.7,513.6 L119.4,513.1 L123.0,512.7 L126.7,512.3 L130.4,512.0 L134.1,511.7 L137.7,511.5 L141.4,511.4 L145.1,511.4 L148.8,511.4 L152.4,511.6 L156.1,511.8 L159.8,512.0 L163.4,512.4 L167.1,512.8 L170.8,513.2 L174.5,513.7 L178.1,514.3 L181.8,514.9 L185.5,515.5 L189.2,516.1 L192.8,516.8 L196.5,517.4 L200.2,518.1 L203.9,518.7 L207.5,519.3 L211.2,519.9 L214.9,520.4 L218.6,520.9 L222.2,521.3 L225.9,521.7 L229.6,521.9 L233.2,522.2 L236.9,522.3 L240.6,522.4 L244.3,522.4 L247.9,522.3 L251.6,522.2 L255.3,521.9 L259.0,521.6 L262.6,521.3 L266.3,520.8 L270.0,520.3 L273.7,519.8 L277.3,520.2 L281.0,520.5" fill="none" stroke="#ffffff" stroke-opacity=".5" stroke-width="1.8" filter="url(#bl2)"/>
<path d="M101.0,533.1 L104.7,533.5 L108.3,533.8 L112.0,533.2 L115.7,532.6 L119.4,532.1 L123.0,531.7 L126.7,531.3 L130.4,531.0 L134.1,530.7 L137.7,530.5 L141.4,530.4 L145.1,530.4 L148.8,530.4 L152.4,530.6 L156.1,530.8 L159.8,531.0 L163.4,531.4 L167.1,531.8 L170.8,532.2 L174.5,532.7 L178.1,533.3 L181.8,533.9 L185.5,534.5 L189.2,535.1 L192.8,535.8 L196.5,536.4 L200.2,537.1 L203.9,537.7 L207.5,538.3 L211.2,538.9 L214.9,539.4 L218.6,539.9 L222.2,540.3 L225.9,540.7 L229.6,540.9 L233.2,541.2 L236.9,541.3 L240.6,541.4 L244.3,541.4 L247.9,541.3 L251.6,541.2 L255.3,540.9 L259.0,540.6 L262.6,540.3 L266.3,539.8 L270.0,539.3 L273.7,538.8 L277.3,537.3 L281.0,535.7" fill="none" stroke="#ffffff" stroke-opacity=".5" stroke-width="1.8" filter="url(#bl2)"/>
<g fill="none" stroke="#ffffff" stroke-opacity="0.7" stroke-width="1.55" filter="url(#bl2)"><path d="M-3.4,-6.8 C-1,-2.7 -1.4,0.7 -3,3.4 M3.4,-6.8 C1,-2.7 1.4,0.7 3,3.4 M-2.4,2.7 C-1.4,5.4 1.4,5.4 2.4,2.7 M0,4.8 L0,6.8" transform="translate(101.0,565.9) rotate(-9.9)"/><path d="M-3.4,-7.6 C-1,-3.1 -1.4,0.8 -3,3.8 M3.4,-7.6 C1,-3.1 1.4,0.8 3,3.8 M-2.4,3.1 C-1.4,6.1 1.4,6.1 2.4,3.1 M0,5.3 L0,7.6" transform="translate(104.6,565.3) rotate(-9.7)"/><path d="M-3.4,-8.5 C-1,-3.4 -1.4,0.8 -3,4.2 M3.4,-8.5 C1,-3.4 1.4,0.8 3,4.2 M-2.4,3.4 C-1.4,6.8 1.4,6.8 2.4,3.4 M0,5.9 L0,8.5" transform="translate(108.2,564.7) rotate(-9.3)"/><path d="M-3.4,-8.5 C-1,-3.4 -1.4,0.9 -3,4.2 M3.4,-8.5 C1,-3.4 1.4,0.9 3,4.2 M-2.4,3.4 C-1.4,6.8 1.4,6.8 2.4,3.4 M0,5.9 L0,8.5" transform="translate(111.8,564.1) rotate(-8.8)"/><path d="M-3.4,-8.5 C-1,-3.4 -1.4,0.9 -3,4.2 M3.4,-8.5 C1,-3.4 1.4,0.9 3,4.2 M-2.4,3.4 C-1.4,6.8 1.4,6.8 2.4,3.4 M0,5.9 L0,8.5" transform="translate(115.4,563.6) rotate(-8.2)"/><path d="M-3.4,-8.5 C-1,-3.4 -1.4,0.9 -3,4.2 M3.4,-8.5 C1,-3.4 1.4,0.9 3,4.2 M-2.4,3.4 C-1.4,6.8 1.4,6.8 2.4,3.4 M0,5.9 L0,8.5" transform="translate(119.0,563.1) rotate(-7.4)"/><path d="M-3.4,-8.5 C-1,-3.4 -1.4,0.9 -3,4.2 M3.4,-8.5 C1,-3.4 1.4,0.9 3,4.2 M-2.4,3.4 C-1.4,6.8 1.4,6.8 2.4,3.4 M0,5.9 L0,8.5" transform="translate(122.6,562.6) rotate(-6.6)"/><path d="M-3.4,-8.5 C-1,-3.4 -1.4,0.9 -3,4.2 M3.4,-8.5 C1,-3.4 1.4,0.9 3,4.2 M-2.4,3.4 C-1.4,6.8 1.4,6.8 2.4,3.4 M0,5.9 L0,8.5" transform="translate(126.3,562.2) rotate(-5.7)"/><path d="M-3.4,-8.5 C-1,-3.4 -1.4,0.9 -3,4.2 M3.4,-8.5 C1,-3.4 1.4,0.9 3,4.2 M-2.4,3.4 C-1.4,6.8 1.4,6.8 2.4,3.4 M0,5.9 L0,8.5" transform="translate(129.9,561.9) rotate(-4.7)"/><path d="M-3.4,-8.5 C-1,-3.4 -1.4,0.9 -3,4.2 M3.4,-8.5 C1,-3.4 1.4,0.9 3,4.2 M-2.4,3.4 C-1.4,6.8 1.4,6.8 2.4,3.4 M0,5.9 L0,8.5" transform="translate(133.5,561.7) rotate(-3.6)"/><path d="M-3.4,-8.5 C-1,-3.4 -1.4,0.9 -3,4.2 M3.4,-8.5 C1,-3.4 1.4,0.9 3,4.2 M-2.4,3.4 C-1.4,6.8 1.4,6.8 2.4,3.4 M0,5.9 L0,8.5" transform="translate(137.1,561.5) rotate(-2.5)"/><path d="M-3.4,-8.5 C-1,-3.4 -1.4,0.9 -3,4.2 M3.4,-8.5 C1,-3.4 1.4,0.9 3,4.2 M-2.4,3.4 C-1.4,6.8 1.4,6.8 2.4,3.4 M0,5.9 L0,8.5" transform="translate(140.7,561.3) rotate(-1.3)"/><path d="M-3.4,-8.5 C-1,-3.4 -1.4,0.9 -3,4.2 M3.4,-8.5 C1,-3.4 1.4,0.9 3,4.2 M-2.4,3.4 C-1.4,6.8 1.4,6.8 2.4,3.4 M0,5.9 L0,8.5" transform="translate(144.3,561.3) rotate(-0.1)"/><path d="M-3.4,-8.5 C-1,-3.4 -1.4,0.9 -3,4.2 M3.4,-8.5 C1,-3.4 1.4,0.9 3,4.2 M-2.4,3.4 C-1.4,6.8 1.4,6.8 2.4,3.4 M0,5.9 L0,8.5" transform="translate(147.9,561.3) rotate(1.0)"/><path d="M-3.4,-8.5 C-1,-3.4 -1.4,0.9 -3,4.2 M3.4,-8.5 C1,-3.4 1.4,0.9 3,4.2 M-2.4,3.4 C-1.4,6.8 1.4,6.8 2.4,3.4 M0,5.9 L0,8.5" transform="translate(151.5,561.4) rotate(2.2)"/><path d="M-3.4,-8.5 C-1,-3.4 -1.4,0.9 -3,4.2 M3.4,-8.5 C1,-3.4 1.4,0.9 3,4.2 M-2.4,3.4 C-1.4,6.8 1.4,6.8 2.4,3.4 M0,5.9 L0,8.5" transform="translate(155.1,561.6) rotate(3.3)"/><path d="M-3.4,-8.5 C-1,-3.4 -1.4,0.9 -3,4.2 M3.4,-8.5 C1,-3.4 1.4,0.9 3,4.2 M-2.4,3.4 C-1.4,6.8 1.4,6.8 2.4,3.4 M0,5.9 L0,8.5" transform="translate(158.7,561.8) rotate(4.4)"/><path d="M-3.4,-8.5 C-1,-3.4 -1.4,0.9 -3,4.2 M3.4,-8.5 C1,-3.4 1.4,0.9 3,4.2 M-2.4,3.4 C-1.4,6.8 1.4,6.8 2.4,3.4 M0,5.9 L0,8.5" transform="translate(162.3,562.2) rotate(5.4)"/><path d="M-3.4,-8.5 C-1,-3.4 -1.4,0.9 -3,4.2 M3.4,-8.5 C1,-3.4 1.4,0.9 3,4.2 M-2.4,3.4 C-1.4,6.8 1.4,6.8 2.4,3.4 M0,5.9 L0,8.5" transform="translate(165.9,562.5) rotate(6.4)"/><path d="M-3.4,-8.5 C-1,-3.4 -1.4,0.9 -3,4.2 M3.4,-8.5 C1,-3.4 1.4,0.9 3,4.2 M-2.4,3.4 C-1.4,6.8 1.4,6.8 2.4,3.4 M0,5.9 L0,8.5" transform="translate(169.5,563.0) rotate(7.2)"/><path d="M-3.4,-8.5 C-1,-3.4 -1.4,0.9 -3,4.2 M3.4,-8.5 C1,-3.4 1.4,0.9 3,4.2 M-2.4,3.4 C-1.4,6.8 1.4,6.8 2.4,3.4 M0,5.9 L0,8.5" transform="translate(173.2,563.4) rotate(8.0)"/><path d="M-3.4,-8.5 C-1,-3.4 -1.4,0.9 -3,4.2 M3.4,-8.5 C1,-3.4 1.4,0.9 3,4.2 M-2.4,3.4 C-1.4,6.8 1.4,6.8 2.4,3.4 M0,5.9 L0,8.5" transform="translate(176.8,564.0) rotate(8.6)"/><path d="M-3.4,-8.5 C-1,-3.4 -1.4,0.9 -3,4.2 M3.4,-8.5 C1,-3.4 1.4,0.9 3,4.2 M-2.4,3.4 C-1.4,6.8 1.4,6.8 2.4,3.4 M0,5.9 L0,8.5" transform="translate(180.4,564.5) rotate(9.2)"/><path d="M-3.4,-8.5 C-1,-3.4 -1.4,0.9 -3,4.2 M3.4,-8.5 C1,-3.4 1.4,0.9 3,4.2 M-2.4,3.4 C-1.4,6.8 1.4,6.8 2.4,3.4 M0,5.9 L0,8.5" transform="translate(184.0,565.1) rotate(9.6)"/><path d="M-3.4,-8.5 C-1,-3.4 -1.4,0.9 -3,4.2 M3.4,-8.5 C1,-3.4 1.4,0.9 3,4.2 M-2.4,3.4 C-1.4,6.8 1.4,6.8 2.4,3.4 M0,5.9 L0,8.5" transform="translate(187.6,565.8) rotate(9.9)"/><path d="M-3.4,-8.5 C-1,-3.4 -1.4,0.9 -3,4.2 M3.4,-8.5 C1,-3.4 1.4,0.9 3,4.2 M-2.4,3.4 C-1.4,6.8 1.4,6.8 2.4,3.4 M0,5.9 L0,8.5" transform="translate(191.2,566.4) rotate(10.0)"/><path d="M-3.4,-8.5 C-1,-3.4 -1.4,0.9 -3,4.2 M3.4,-8.5 C1,-3.4 1.4,0.9 3,4.2 M-2.4,3.4 C-1.4,6.8 1.4,6.8 2.4,3.4 M0,5.9 L0,8.5" transform="translate(194.8,567.0) rotate(10.0)"/><path d="M-3.4,-8.5 C-1,-3.4 -1.4,0.9 -3,4.2 M3.4,-8.5 C1,-3.4 1.4,0.9 3,4.2 M-2.4,3.4 C-1.4,6.8 1.4,6.8 2.4,3.4 M0,5.9 L0,8.5" transform="translate(198.4,567.7) rotate(9.9)"/><path d="M-3.4,-8.5 C-1,-3.4 -1.4,0.9 -3,4.2 M3.4,-8.5 C1,-3.4 1.4,0.9 3,4.2 M-2.4,3.4 C-1.4,6.8 1.4,6.8 2.4,3.4 M0,5.9 L0,8.5" transform="translate(202.0,568.3) rotate(9.7)"/><path d="M-3.4,-8.5 C-1,-3.4 -1.4,0.9 -3,4.2 M3.4,-8.5 C1,-3.4 1.4,0.9 3,4.2 M-2.4,3.4 C-1.4,6.8 1.4,6.8 2.4,3.4 M0,5.9 L0,8.5" transform="translate(205.6,568.9) rotate(9.3)"/><path d="M-3.4,-8.5 C-1,-3.4 -1.4,0.9 -3,4.2 M3.4,-8.5 C1,-3.4 1.4,0.9 3,4.2 M-2.4,3.4 C-1.4,6.8 1.4,6.8 2.4,3.4 M0,5.9 L0,8.5" transform="translate(209.2,569.5) rotate(8.8)"/><path d="M-3.4,-8.5 C-1,-3.4 -1.4,0.9 -3,4.2 M3.4,-8.5 C1,-3.4 1.4,0.9 3,4.2 M-2.4,3.4 C-1.4,6.8 1.4,6.8 2.4,3.4 M0,5.9 L0,8.5" transform="translate(212.8,570.0) rotate(8.2)"/><path d="M-3.4,-8.5 C-1,-3.4 -1.4,0.9 -3,4.2 M3.4,-8.5 C1,-3.4 1.4,0.9 3,4.2 M-2.4,3.4 C-1.4,6.8 1.4,6.8 2.4,3.4 M0,5.9 L0,8.5" transform="translate(216.5,570.5) rotate(7.5)"/><path d="M-3.4,-8.5 C-1,-3.4 -1.4,0.9 -3,4.2 M3.4,-8.5 C1,-3.4 1.4,0.9 3,4.2 M-2.4,3.4 C-1.4,6.8 1.4,6.8 2.4,3.4 M0,5.9 L0,8.5" transform="translate(220.1,571.0) rotate(6.6)"/><path d="M-3.4,-8.5 C-1,-3.4 -1.4,0.9 -3,4.2 M3.4,-8.5 C1,-3.4 1.4,0.9 3,4.2 M-2.4,3.4 C-1.4,6.8 1.4,6.8 2.4,3.4 M0,5.9 L0,8.5" transform="translate(223.7,571.3) rotate(5.7)"/><path d="M-3.4,-8.5 C-1,-3.4 -1.4,0.9 -3,4.2 M3.4,-8.5 C1,-3.4 1.4,0.9 3,4.2 M-2.4,3.4 C-1.4,6.8 1.4,6.8 2.4,3.4 M0,5.9 L0,8.5" transform="translate(227.3,571.7) rotate(4.7)"/><path d="M-3.4,-8.5 C-1,-3.4 -1.4,0.9 -3,4.2 M3.4,-8.5 C1,-3.4 1.4,0.9 3,4.2 M-2.4,3.4 C-1.4,6.8 1.4,6.8 2.4,3.4 M0,5.9 L0,8.5" transform="translate(230.9,571.9) rotate(3.6)"/><path d="M-3.4,-8.5 C-1,-3.4 -1.4,0.9 -3,4.2 M3.4,-8.5 C1,-3.4 1.4,0.9 3,4.2 M-2.4,3.4 C-1.4,6.8 1.4,6.8 2.4,3.4 M0,5.9 L0,8.5" transform="translate(234.5,572.1) rotate(2.5)"/><path d="M-3.4,-8.5 C-1,-3.4 -1.4,0.9 -3,4.2 M3.4,-8.5 C1,-3.4 1.4,0.9 3,4.2 M-2.4,3.4 C-1.4,6.8 1.4,6.8 2.4,3.4 M0,5.9 L0,8.5" transform="translate(238.1,572.3) rotate(1.4)"/><path d="M-3.4,-8.5 C-1,-3.4 -1.4,0.9 -3,4.2 M3.4,-8.5 C1,-3.4 1.4,0.9 3,4.2 M-2.4,3.4 C-1.4,6.8 1.4,6.8 2.4,3.4 M0,5.9 L0,8.5" transform="translate(241.7,572.3) rotate(0.2)"/><path d="M-3.4,-8.5 C-1,-3.4 -1.4,0.9 -3,4.2 M3.4,-8.5 C1,-3.4 1.4,0.9 3,4.2 M-2.4,3.4 C-1.4,6.8 1.4,6.8 2.4,3.4 M0,5.9 L0,8.5" transform="translate(245.3,572.3) rotate(-1.0)"/><path d="M-3.4,-8.5 C-1,-3.4 -1.4,0.9 -3,4.2 M3.4,-8.5 C1,-3.4 1.4,0.9 3,4.2 M-2.4,3.4 C-1.4,6.8 1.4,6.8 2.4,3.4 M0,5.9 L0,8.5" transform="translate(248.9,572.2) rotate(-2.2)"/><path d="M-3.4,-8.5 C-1,-3.4 -1.4,0.9 -3,4.2 M3.4,-8.5 C1,-3.4 1.4,0.9 3,4.2 M-2.4,3.4 C-1.4,6.8 1.4,6.8 2.4,3.4 M0,5.9 L0,8.5" transform="translate(252.5,572.0) rotate(-3.3)"/><path d="M-3.4,-8.5 C-1,-3.4 -1.4,0.9 -3,4.2 M3.4,-8.5 C1,-3.4 1.4,0.9 3,4.2 M-2.4,3.4 C-1.4,6.8 1.4,6.8 2.4,3.4 M0,5.9 L0,8.5" transform="translate(256.1,571.8) rotate(-4.4)"/><path d="M-3.4,-8.5 C-1,-3.4 -1.4,0.9 -3,4.2 M3.4,-8.5 C1,-3.4 1.4,0.9 3,4.2 M-2.4,3.4 C-1.4,6.8 1.4,6.8 2.4,3.4 M0,5.9 L0,8.5" transform="translate(259.7,571.4) rotate(-5.4)"/><path d="M-3.4,-8.5 C-1,-3.4 -1.4,0.9 -3,4.2 M3.4,-8.5 C1,-3.4 1.4,0.9 3,4.2 M-2.4,3.4 C-1.4,6.8 1.4,6.8 2.4,3.4 M0,5.9 L0,8.5" transform="translate(263.4,571.1) rotate(-6.4)"/><path d="M-3.4,-8.5 C-1,-3.4 -1.4,0.9 -3,4.2 M3.4,-8.5 C1,-3.4 1.4,0.9 3,4.2 M-2.4,3.4 C-1.4,6.8 1.4,6.8 2.4,3.4 M0,5.9 L0,8.5" transform="translate(267.0,570.6) rotate(-7.2)"/><path d="M-3.4,-8.5 C-1,-3.4 -1.4,0.9 -3,4.2 M3.4,-8.5 C1,-3.4 1.4,0.9 3,4.2 M-2.4,3.4 C-1.4,6.8 1.4,6.8 2.4,3.4 M0,5.9 L0,8.5" transform="translate(270.6,570.2) rotate(-8.0)"/><path d="M-3.4,-8.5 C-1,-3.4 -1.4,0.9 -3,4.2 M3.4,-8.5 C1,-3.4 1.4,0.9 3,4.2 M-2.4,3.4 C-1.4,6.8 1.4,6.8 2.4,3.4 M0,5.9 L0,8.5" transform="translate(274.2,569.6) rotate(-8.6)"/><path d="M-3.4,-8.5 C-1,-3.4 -1.4,0.8 -3,4.2 M3.4,-8.5 C1,-3.4 1.4,0.8 3,4.2 M-2.4,3.4 C-1.4,6.8 1.4,6.8 2.4,3.4 M0,5.9 L0,8.5" transform="translate(277.8,569.1) rotate(-9.2)"/><path d="M-3.4,-7.6 C-1,-3.1 -1.4,0.8 -3,3.8 M3.4,-7.6 C1,-3.1 1.4,0.8 3,3.8 M-2.4,3.1 C-1.4,6.1 1.4,6.1 2.4,3.1 M0,5.3 L0,7.6" transform="translate(281.4,568.5) rotate(-9.6)"/><path d="M-3.4,-6.8 C-1,-2.7 -1.4,0.7 -3,3.4 M3.4,-6.8 C1,-2.7 1.4,0.7 3,3.4 M-2.4,2.7 C-1.4,5.4 1.4,5.4 2.4,2.7 M0,4.8 L0,6.8" transform="translate(285.0,567.9) rotate(-9.9)"/></g>
<path d="M101.0,559.1 L104.6,557.7 L108.2,556.2 L111.8,555.6 L115.4,555.1 L119.0,554.6 L122.6,554.1 L126.3,553.7 L129.9,553.4 L133.5,553.2 L137.1,553.0 L140.7,552.8 L144.3,552.8 L147.9,552.8 L151.5,552.9 L155.1,553.1 L158.7,553.3 L162.3,553.7 L165.9,554.0 L169.5,554.5 L173.2,554.9 L176.8,555.5 L180.4,556.0 L184.0,556.6 L187.6,557.3 L191.2,557.9 L194.8,558.5 L198.4,559.2 L202.0,559.8 L205.6,560.4 L209.2,561.0 L212.8,561.5 L216.5,562.0 L220.1,562.5 L223.7,562.8 L227.3,563.2 L230.9,563.4 L234.5,563.6 L238.1,563.8 L241.7,563.8 L245.3,563.8 L248.9,563.7 L252.5,563.5 L256.1,563.3 L259.7,562.9 L263.4,562.6 L267.0,562.1 L270.6,561.7 L274.2,561.1 L277.8,560.6 L281.4,560.8 L285.0,561.1 L285.0,574.7 L281.4,576.1 L277.8,577.5 L274.2,578.1 L270.6,578.7 L267.0,579.1 L263.4,579.6 L259.7,579.9 L256.1,580.3 L252.5,580.5 L248.9,580.7 L245.3,580.8 L241.7,580.8 L238.1,580.8 L234.5,580.6 L230.9,580.4 L227.3,580.2 L223.7,579.8 L220.1,579.5 L216.5,579.0 L212.8,578.5 L209.2,578.0 L205.6,577.4 L202.0,576.8 L198.4,576.2 L194.8,575.5 L191.2,574.9 L187.6,574.3 L184.0,573.6 L180.4,573.0 L176.8,572.5 L173.2,571.9 L169.5,571.5 L165.9,571.0 L162.3,570.7 L158.7,570.3 L155.1,570.1 L151.5,569.9 L147.9,569.8 L144.3,569.8 L140.7,569.8 L137.1,570.0 L133.5,570.2 L129.9,570.4 L126.3,570.7 L122.6,571.1 L119.0,571.6 L115.4,572.1 L111.8,572.6 L108.2,573.2 L104.6,572.9 L101.0,572.7 Z" fill="#ffffff" fill-opacity=".28" filter="url(#bl2)"/>
<rect x="102.9" y="600.1" width="9" height="11" fill="#ffffff" transform="rotate(-15 107.4 605.6)"/>
<rect x="113.5" y="596.0" width="11" height="14" fill="#ffffff" transform="rotate(-8 119 603)"/>
<rect x="126.0" y="593.0" width="12" height="16" fill="#ffffff" transform="rotate(-5 132 601)"/>
<rect x="140.0" y="589.1" width="14" height="21" fill="#ffffff" transform="rotate(0 147 599.6)"/>
<rect x="157.4" y="589.5" width="14" height="21" fill="#ffffff" transform="rotate(8 164.4 600)"/>
<rect x="176.6" y="594.1" width="12" height="17" fill="#ffffff" transform="rotate(12 182.6 602.6)"/>
<rect x="191.6" y="598.6" width="10" height="14" fill="#ffffff" transform="rotate(12 196.6 605.6)"/>
<rect x="202.5" y="599.0" width="13" height="18" fill="#ffffff" transform="rotate(8 209 608)"/>
<rect x="217.5" y="601.0" width="13" height="18" fill="#ffffff" transform="rotate(3 224 610)"/>
<rect x="234.6" y="603.4" width="10" height="14" fill="#ffffff" transform="rotate(0 239.6 610.4)"/>
<rect x="245.9" y="599.5" width="13" height="19" fill="#ffffff" transform="rotate(-8 252.4 609)"/>
<rect x="260.9" y="596.5" width="15" height="21" fill="#ffffff" transform="rotate(-12 268.4 607)"/>
<path d="M95.6,632.8 L100.5,631.9 L105.3,631.1 L110.2,630.3 L115.1,629.5 L120.0,628.8 L124.8,628.3 L129.7,627.8 L134.6,627.5 L139.5,627.3 L144.3,627.2 L149.2,627.3 L154.1,627.5 L159.0,627.8 L163.8,628.3 L168.7,628.8 L173.6,629.5 L178.5,630.3 L183.3,631.1 L188.2,631.9 L193.1,632.8 L198.0,633.7 L202.8,634.5 L207.7,635.3 L212.6,636.1 L217.5,636.8 L222.3,637.3 L227.2,637.8 L232.1,638.1 L237.0,638.3 L241.8,638.4 L246.7,638.3 L251.6,638.1 L256.5,637.8 L261.4,637.3 L266.2,636.8 L271.1,636.1 L276.0,635.3 L280.9,634.5 L285.7,633.7 L290.6,632.8 L290.6,657.2 L285.7,658.1 L280.9,658.9 L276.0,659.7 L271.1,660.5 L266.2,661.2 L261.4,661.7 L256.5,662.2 L251.6,662.5 L246.7,662.7 L241.8,662.8 L237.0,662.7 L232.1,662.5 L227.2,662.2 L222.3,661.7 L217.5,661.2 L212.6,660.5 L207.7,659.7 L202.8,658.9 L198.0,658.1 L193.1,657.2 L188.2,656.3 L183.3,655.5 L178.5,654.7 L173.6,653.9 L168.7,653.2 L163.8,652.7 L159.0,652.2 L154.1,651.9 L149.2,651.7 L144.3,651.6 L139.5,651.7 L134.6,651.9 L129.7,652.2 L124.8,652.7 L120.0,653.2 L115.1,653.9 L110.2,654.7 L105.3,655.5 L100.5,656.3 L95.6,657.2 Z" fill="#ffffff"/>
<path d="M95.6,686.9 L103.0,671.9 L114.0,675.9 L120.0,670.9 L125.0,672.9 L131.0,667.9 L137.9,668.9 L143.9,667.5 L153.9,668.9 L158.9,667.5 L169.9,673.9 L180.9,670.9 L189.9,668.9 L197.9,675.9 L207.9,680.9 L214.9,673.9 L223.9,675.9 L240.9,675.9 L242.9,681.9 L246.9,673.9 L255.9,674.9 L261.9,668.9 L269.9,674.9 L277.9,670.9 L288.3,687.9 L288.3,688.9 L279.9,694.9 L269.9,699.9 L266.9,695.9 L259.9,699.9 L249.9,702.3 L237.9,697.9 L229.9,702.3 L219.9,701.9 L215.9,702.3 L196.9,702.3 L185.9,695.9 L177.9,694.9 L169.9,697.9 L158.9,692.9 L149.9,697.9 L140.9,689.9 L133.9,697.9 L126.0,695.9 L119.0,701.9 L110.0,697.9 L101.0,693.9 L95.0,688.9 Z" fill="#ffffff"/>
<g stroke="#f0f0f0" stroke-width="2.2" stroke-opacity=".95" fill="none" clip-path="url(#c7)" filter="url(#bl)"><path d="M-11,-5.9 L11,-5.9" transform="translate(107.3,725.5) rotate(-3)"/><path d="M-11,0 L11,0" transform="translate(107.3,725.5) rotate(-3)"/><path d="M-11,5.9 L11,5.9" transform="translate(107.3,725.5) rotate(-3)"/><path d="M-11,-5.9 L11,-5.9" transform="translate(125,721.7) rotate(-78)"/><path d="M-11,0 L11,0" transform="translate(125,721.7) rotate(-78)"/><path d="M-11,5.9 L11,5.9" transform="translate(125,721.7) rotate(-78)"/><path d="M-11,-5.9 L11,-5.9" transform="translate(140.8,719.6) rotate(12)"/><path d="M-11,0 L11,0" transform="translate(140.8,719.6) rotate(12)"/><path d="M-11,5.9 L11,5.9" transform="translate(140.8,719.6) rotate(12)"/><path d="M-11,-5.9 L11,-5.9" transform="translate(157.7,719.4) rotate(28)"/><path d="M-11,0 L11,0" transform="translate(157.7,719.4) rotate(28)"/><path d="M-11,5.9 L11,5.9" transform="translate(157.7,719.4) rotate(28)"/><path d="M-11,-5.9 L11,-5.9" transform="translate(176,720.6) rotate(-55)"/><path d="M-11,0 L11,0" transform="translate(176,720.6) rotate(-55)"/><path d="M-11,5.9 L11,5.9" transform="translate(176,720.6) rotate(-55)"/><path d="M-11,-5.9 L11,-5.9" transform="translate(190,723.6) rotate(-57)"/><path d="M-11,0 L11,0" transform="translate(190,723.6) rotate(-57)"/><path d="M-11,5.9 L11,5.9" transform="translate(190,723.6) rotate(-57)"/><path d="M-11,-5.9 L11,-5.9" transform="translate(204,727) rotate(-60)"/><path d="M-11,0 L11,0" transform="translate(204,727) rotate(-60)"/><path d="M-11,5.9 L11,5.9" transform="translate(204,727) rotate(-60)"/><path d="M-11,-5.9 L11,-5.9" transform="translate(226,730.5) rotate(90)"/><path d="M-11,0 L11,0" transform="translate(226,730.5) rotate(90)"/><path d="M-11,5.9 L11,5.9" transform="translate(226,730.5) rotate(90)"/><path d="M-11,-5.9 L11,-5.9" transform="translate(243,729.8) rotate(65)"/><path d="M-11,0 L11,0" transform="translate(243,729.8) rotate(65)"/><path d="M-11,5.9 L11,5.9" transform="translate(243,729.8) rotate(65)"/><path d="M-11,-5.9 L11,-5.9" transform="translate(260.6,729) rotate(-5)"/><path d="M-11,0 L11,0" transform="translate(260.6,729) rotate(-5)"/><path d="M-11,5.9 L11,5.9" transform="translate(260.6,729) rotate(-5)"/><path d="M-11,-5.9 L11,-5.9" transform="translate(278.2,724.4) rotate(62)"/><path d="M-11,0 L11,0" transform="translate(278.2,724.4) rotate(62)"/><path d="M-11,5.9 L11,5.9" transform="translate(278.2,724.4) rotate(62)"/><path d="M-11,0 L11,0" transform="translate(214.6,730) rotate(-62)"/></g>
</svg>
<span class="t" id="t0" style="left:61px;top:7.45px;font-size:14px;line-height:14px;color:#e8e8e8;letter-spacing:-0.072px;">Datei</span>
<span class="t" id="t1" style="left:117.4px;top:7.45px;font-size:14px;line-height:14px;color:#e8e8e8;letter-spacing:0.031px;">Bearbeiten</span>
<span class="t" id="t2" style="left:210.5px;top:7.45px;font-size:14px;line-height:14px;color:#e8e8e8;letter-spacing:0.214px;">Bild</span>
<span class="t" id="t3" style="left:256.4px;top:7.45px;font-size:14px;line-height:14px;color:#e8e8e8;letter-spacing:-0.171px;">Ebene</span>
<span class="t" id="t4" style="left:318.5px;top:7.45px;font-size:14px;line-height:14px;color:#e8e8e8;letter-spacing:0.419px;">Schrift</span>
<span class="t" id="t5" style="left:382.2px;top:7.45px;font-size:14px;line-height:14px;color:#e8e8e8;letter-spacing:0.396px;">Auswahl</span>
<span class="t" id="t6" style="left:459.6px;top:7.45px;font-size:14px;line-height:14px;color:#e8e8e8;letter-spacing:0.155px;">Filter</span>
<span class="t" id="t7" style="left:512.6px;top:7.45px;font-size:14px;line-height:14px;color:#e8e8e8;letter-spacing:0.494px;">3D</span>
<span class="t" id="t8" style="left:552.4px;top:7.45px;font-size:14px;line-height:14px;color:#e8e8e8;letter-spacing:0.613px;">Ansicht</span>
<span class="t" id="t9" style="left:623.8px;top:7.45px;font-size:14px;line-height:14px;color:#e8e8e8;letter-spacing:-0.095px;">Fenster</span>
<span class="t" id="t10" style="left:693.4px;top:7.45px;font-size:14px;line-height:14px;color:#e8e8e8;letter-spacing:0.621px;">Hilfe</span>
<span class="t" id="t11" style="left:11.7px;top:4.28px;font-size:20.7px;line-height:20.7px;color:#6c9ad2;font-weight:bold;letter-spacing:-0.012px;transform:scaleY(1.24);transform-origin:0 17.52px;-webkit-text-stroke:.5px #6c9ad2;">Ps</span>
<span class="t" id="t12" style="left:17.6px;top:603.24px;font-size:27px;line-height:27px;color:#c8c8c8;letter-spacing:0.000px;font-family:'Liberation Serif',serif;">T</span>
<span class="t" id="t13" style="left:98.6px;top:53.69px;font-size:11px;line-height:11px;color:#f0f0f0;letter-spacing:-0.250px;">50</span>
<span class="t" id="t14" style="left:191.6px;top:46.84px;font-size:12px;line-height:12px;color:#e4e4e4;letter-spacing:0.208px;-webkit-text-stroke:.35px #e4e4e4;">Modus:</span>
<span class="t" id="t15" style="left:251px;top:46.64px;font-size:12px;line-height:12px;color:#e8e8e8;letter-spacing:0.066px;">Normal</span>
<span class="t" id="t16" style="left:434px;top:46.14px;font-size:12px;line-height:12px;color:#e4e4e4;letter-spacing:0.351px;-webkit-text-stroke:.35px #e4e4e4;">Deckkr.:</span>
<span class="t" id="t17" style="left:496.4px;top:46.64px;font-size:12px;line-height:12px;color:#e8e8e8;letter-spacing:-0.168px;">100%</span>
<span class="t" id="t18" style="left:617.5px;top:46.34px;font-size:12px;line-height:12px;color:#e4e4e4;letter-spacing:-0.043px;-webkit-text-stroke:.35px #e4e4e4;">Fluss:</span>
<span class="t" id="t19" style="left:663.6px;top:47.54px;font-size:12px;line-height:12px;color:#e8e8e8;letter-spacing:-0.201px;">100%</span>
<span class="t" id="t20" style="left:367.4px;top:81.80px;font-size:13px;line-height:13px;color:#999999;font-weight:bold;letter-spacing:0.359px;">Unbenannt-1 bei 25% (Ebene 0, RGB/8) *</span>
<span class="t" id="t21" style="left:671px;top:81.80px;font-size:13px;line-height:13px;color:#dcdcdc;font-weight:bold;letter-spacing:0.407px;">Unbenannt-2 bei 100% (RGB/8)</span>
<span class="t" id="t22" style="left:62px;top:95.44px;font-size:12px;line-height:12px;color:#e6e6e6;font-weight:bold;letter-spacing:0.294px;">Aktionen</span>
<span class="t" id="t23" style="left:162.4px;top:120.44px;font-size:12px;line-height:12px;color:#f2f2f2;letter-spacing:0.168px;">Standardaktionen</span>
<span class="t" id="t24" style="left:163px;top:145.44px;font-size:12px;line-height:12px;color:#f2f2f2;letter-spacing:-0.176px;">Eigen</span>
<span class="t" id="t25" style="left:154px;top:170.44px;font-size:12px;line-height:12px;color:#f2f2f2;letter-spacing:0.214px;">Zuschnitt 1300px</span>
<span class="t" id="t26" style="left:154px;top:195.44px;font-size:12px;line-height:12px;color:#f2f2f2;letter-spacing:0.325px;">SW und Konstrast</span>
<span class="t" id="t27" style="left:154px;top:220.44px;font-size:12px;line-height:12px;color:#f2f2f2;letter-spacing:-0.048px;">2x Zoom</span>
<span class="t" id="t28" style="left:154px;top:245.44px;font-size:12px;line-height:12px;color:#f2f2f2;letter-spacing:0.100px;">Mini Setup</span>
<span class="t" id="t29" style="left:154px;top:270.44px;font-size:12px;line-height:12px;color:#f2f2f2;letter-spacing:0.224px;">Mini Kurven</span>
<span class="t" id="t30" style="left:177.6px;top:295.44px;font-size:12px;line-height:12px;color:#f2f2f2;letter-spacing:0.219px;">Gradationskurven</span>
<span class="t" id="t31" style="left:154px;top:320.44px;font-size:12px;line-height:12px;color:#f2f2f2;letter-spacing:-0.621px;">BLAAAA</span>
<span class="t" id="t32" style="left:62px;top:396.44px;font-size:12px;line-height:12px;color:#e6e6e6;font-weight:bold;letter-spacing:-0.183px;">Pinselvorgaben</span>
<span class="t" id="t33" style="left:60.4px;top:422.84px;font-size:12px;line-height:12px;color:#e4e4e4;letter-spacing:0.051px;-webkit-text-stroke:.35px #e4e4e4;">Größe:</span>
<span class="t" id="t34" style="left:210px;top:423.84px;font-size:12px;line-height:12px;color:#e8e8e8;letter-spacing:-0.272px;">50 Px</span>
<span class="t" id="t35" style="left:68.4px;top:492.09px;font-size:11px;line-height:11px;color:#f2f2f2;letter-spacing:0.350px;">37</span>
<span class="t" id="t36" style="left:68.4px;top:531.69px;font-size:11px;line-height:11px;color:#f2f2f2;letter-spacing:0.350px;">38</span>
<span class="t" id="t37" style="left:68.4px;top:571.69px;font-size:11px;line-height:11px;color:#f2f2f2;letter-spacing:0.350px;">44</span>
<span class="t" id="t38" style="left:68.6px;top:611.69px;font-size:11px;line-height:11px;color:#f2f2f2;letter-spacing:0.350px;">50</span>
<span class="t" id="t39" style="left:68.6px;top:651.09px;font-size:11px;line-height:11px;color:#f2f2f2;letter-spacing:0.350px;">50</span>
<span class="t" id="t40" style="left:69.6px;top:690.29px;font-size:11px;line-height:11px;color:#f2f2f2;letter-spacing:0.350px;">50</span>
<span class="t" id="t41" style="left:68.6px;top:731.69px;font-size:11px;line-height:11px;color:#f2f2f2;letter-spacing:0.350px;">50</span>
<span class="t" id="t42" style="left:62.4px;top:779.84px;font-size:12px;line-height:12px;color:#e6e6e6;font-weight:bold;letter-spacing:0.198px;">Protokoll</span>
<span class="t" id="t43" style="left:131.6px;top:813.42px;font-size:12.5px;line-height:12.5px;color:#ececec;letter-spacing:0.112px;">Unbenannt-2</span>
<span class="t" id="t44" style="left:127px;top:855.84px;font-size:12px;line-height:12px;color:#f4f4f4;letter-spacing:-0.308px;">Neu</span>
<span class="t" id="t45" style="left:62px;top:999.44px;font-size:12px;line-height:12px;color:#e6e6e6;font-weight:bold;letter-spacing:-0.059px;">PaintersWheel</span>
<span class="t" id="t46" style="left:369.6px;top:1274.84px;font-size:12px;line-height:12px;color:#ececec;letter-spacing:-0.234px;">100%</span>
<span class="t" id="t47" style="left:492px;top:1274.84px;font-size:12px;line-height:12px;color:#dadada;letter-spacing:0.119px;">Dok: 732,4 KB/0 Byte</span>
<div style="left:490px;top:1296.6px;width:57.5px;height:11px;background:#242426;"></div>
<div style="left:506px;top:1303px;width:25px;height:5px;box-sizing:border-box;border:1.5px solid #2c3c86;border-bottom:0;"></div>
<div style="left:382px;top:1303.4px;width:27px;height:5px;background:#18284e;"></div>
<div style="left:262px;top:1303px;width:23px;height:23px;border-radius:50%;background:#1d4a78;"></div>
<div style="left:568px;top:1303px;width:23px;height:23px;border-radius:50%;background:#1d5a8a;"></div>
<div style="left:199px;top:1304px;width:8px;height:4px;background:#3a3626;"></div>
<div style="left:0;top:1090px;width:1551px;height:201.5px;background:linear-gradient(rgba(0,0,0,0) 0%,rgba(0,0,0,.02) 25%,rgba(0,0,0,.05) 50%,rgba(0,0,0,.12) 77%,rgba(0,0,0,.2) 100%);"></div>
<div style="left:0;top:1245px;width:1551px;height:8px;background:rgba(255,255,255,.2);"></div>
</div></body></html>
